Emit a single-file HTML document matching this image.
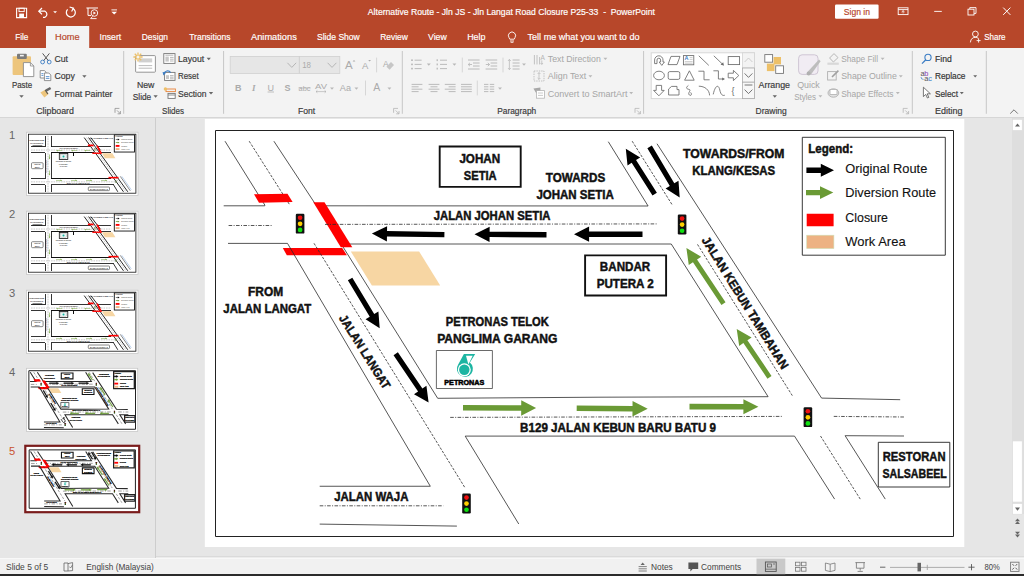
<!DOCTYPE html>
<html lang="en"><head><meta charset="utf-8"><title>Alternative Route - Jln JS - Jln Langat Road Closure P25-33 - PowerPoint</title>
<style>
html,body{margin:0;padding:0;background:#E6E6E6;}
body{width:1024px;height:576px;overflow:hidden;position:relative;font-family:"Liberation Sans",sans-serif;}
.abs{position:absolute;}
#titlebar{left:0;top:0;width:1024px;height:48px;background:#B7472A;}
#ribbon{left:0;top:48px;width:1024px;height:68.6px;background:#F3F3F3;border-bottom:1.6px solid #D6D6D6;}
#pane{left:0;top:118.2px;width:155px;height:439.6px;background:#E6E6E6;border-right:1px solid #CDCDCD;}
#editor{left:156px;top:118.2px;width:868px;height:439.6px;background:#E6E6E6;}
#hscroll{left:156px;top:556px;width:868px;height:2.4px;background:#ECECEC;border-top:0.6px solid #DADADA;}
#vscroll{left:1012px;top:118.2px;width:12px;height:396px;background:#DEDEDE;}
#status{left:0;top:558.4px;width:1024px;height:15.8px;background:#F1F1F1;border-top:0.8px solid #F8F8F8;}
#bottom{left:0;top:574.2px;width:1024px;height:1.8px;background:#2b2b2b;}
svg{position:absolute;left:0;top:0;overflow:visible;}
svg text{font-family:"Liberation Sans",sans-serif;white-space:pre;}
</style></head><body>
<div id="titlebar" class="abs"></div>
<div id="ribbon" class="abs"></div>
<div id="pane" class="abs"></div>
<div id="editor" class="abs"></div>
<div id="vscroll" class="abs"></div>
<div id="hscroll" class="abs"></div>
<div id="status" class="abs"></div>
<div id="bottom" class="abs"></div>
<svg width="1024" height="576" viewBox="0 0 1024 576">
<defs>
<symbol id="s5" viewBox="204.6 118.75 759.9 428.35" preserveAspectRatio="none">
<rect x="204.60" y="118.75" width="760.00" height="428.40" fill="#fff"/>
<rect x="215.50" y="130.50" width="738.00" height="406.00" fill="none" stroke="#222" stroke-width="1.0" vector-effect="non-scaling-stroke"/>
<polygon points="350.80,251.40 419.10,251.40 440.20,285.50 371.90,285.50" fill="#F7D6A3"/>
<polyline points="225.00,141.20 264.80,205.00 264.80,205.80 223.70,205.80" fill="none" stroke="#2b2b2b" stroke-width="0.8" vector-effect="non-scaling-stroke" style="stroke-width:var(--lw,0.8px)"/>
<line x1="249.20" y1="141.20" x2="289.80" y2="205.00" stroke="#2b2b2b" stroke-width="0.8" vector-effect="non-scaling-stroke" style="stroke-width:var(--dw,0.8px)" stroke-dasharray="2.6 1.4"/>
<line x1="273.90" y1="141.20" x2="316.50" y2="205.80" stroke="#2b2b2b" stroke-width="0.8" vector-effect="non-scaling-stroke" style="stroke-width:var(--lw,0.8px)"/>
<polyline points="316.50,205.80 648.10,206.00 608.30,141.70" fill="none" stroke="#2b2b2b" stroke-width="0.8" vector-effect="non-scaling-stroke" style="stroke-width:var(--lw,0.8px)"/>
<polygon points="282.80,248.00 342.20,248.00 346.90,255.20 286.80,255.20" fill="#FF0000" stroke="#FF0000" vector-effect="non-scaling-stroke" style="stroke-width:var(--rw,0px)"/>
<line x1="228.60" y1="225.50" x2="272.80" y2="225.50" stroke="#2b2b2b" stroke-width="0.8" vector-effect="non-scaling-stroke" style="stroke-width:var(--dw,0.8px)" stroke-dasharray="3.6 1.4 1.0 1.4"/>
<polyline points="228.00,243.40 287.50,243.40 430.30,486.25 319.70,486.25" fill="none" stroke="#2b2b2b" stroke-width="0.8" vector-effect="non-scaling-stroke" style="stroke-width:var(--lw,0.8px)"/>
<line x1="314.00" y1="243.30" x2="464.70" y2="487.30" stroke="#2b2b2b" stroke-width="0.8" vector-effect="non-scaling-stroke" style="stroke-width:var(--dw,0.8px)" stroke-dasharray="2.6 1.4"/>
<polyline points="341.20,244.00 437.70,398.30 600.00,397.20 768.10,396.70 671.25,244.00 341.20,244.00" fill="none" stroke="#2b2b2b" stroke-width="0.8" vector-effect="non-scaling-stroke" style="stroke-width:var(--lw,0.8px)"/>
<polygon points="254.00,194.20 287.50,193.80 292.60,201.90 259.00,202.70" fill="#FF0000" stroke="#FF0000" vector-effect="non-scaling-stroke" style="stroke-width:var(--rw,0px)"/>
<polygon points="313.30,202.30 324.50,202.30 352.30,247.20 340.80,247.20" fill="#FF0000" stroke="#FF0000" vector-effect="non-scaling-stroke" style="stroke-width:var(--rw,0px)"/>
<line x1="325.00" y1="224.40" x2="657.00" y2="223.90" stroke="#2b2b2b" stroke-width="0.8" vector-effect="non-scaling-stroke" style="stroke-width:var(--dw,0.8px)" stroke-dasharray="3.6 1.4 1.0 1.4"/>
<line x1="632.20" y1="141.20" x2="672.30" y2="205.00" stroke="#2b2b2b" stroke-width="0.8" vector-effect="non-scaling-stroke" style="stroke-width:var(--dw,0.8px)" stroke-dasharray="2.6 1.4"/>
<line x1="697.50" y1="244.40" x2="792.30" y2="395.60" stroke="#2b2b2b" stroke-width="0.8" vector-effect="non-scaling-stroke" style="stroke-width:var(--dw,0.8px)" stroke-dasharray="2.6 1.4"/>
<polyline points="657.00,143.75 821.60,398.10 900.20,399.70" fill="none" stroke="#2b2b2b" stroke-width="0.8" vector-effect="non-scaling-stroke" style="stroke-width:var(--lw,0.8px)"/>
<line x1="450.20" y1="417.40" x2="781.90" y2="416.40" stroke="#2b2b2b" stroke-width="0.8" vector-effect="non-scaling-stroke" style="stroke-width:var(--dw,0.8px)" stroke-dasharray="3.6 1.4 1.0 1.4"/>
<polyline points="518.75,524.00 465.20,436.10 794.50,436.10 834.60,499.10" fill="none" stroke="#2b2b2b" stroke-width="0.8" vector-effect="non-scaling-stroke" style="stroke-width:var(--lw,0.8px)"/>
<line x1="820.50" y1="436.00" x2="860.25" y2="499.10" stroke="#2b2b2b" stroke-width="0.8" vector-effect="non-scaling-stroke" style="stroke-width:var(--dw,0.8px)" stroke-dasharray="2.6 1.4"/>
<polyline points="885.25,499.10 845.10,435.70 904.00,436.00" fill="none" stroke="#2b2b2b" stroke-width="0.8" vector-effect="non-scaling-stroke" style="stroke-width:var(--lw,0.8px)"/>
<line x1="833.75" y1="416.40" x2="904.00" y2="417.00" stroke="#2b2b2b" stroke-width="0.8" vector-effect="non-scaling-stroke" style="stroke-width:var(--dw,0.8px)" stroke-dasharray="3.6 1.4 1.0 1.4"/>
<line x1="319.70" y1="505.80" x2="443.30" y2="505.80" stroke="#2b2b2b" stroke-width="0.8" vector-effect="non-scaling-stroke" style="stroke-width:var(--dw,0.8px)" stroke-dasharray="3.6 1.4 1.0 1.4"/>
<line x1="319.70" y1="524.10" x2="456.90" y2="526.10" stroke="#2b2b2b" stroke-width="0.8" vector-effect="non-scaling-stroke" style="stroke-width:var(--lw,0.8px)"/>
<polygon points="444.44,231.90 387.04,231.11 387.10,226.16 371.90,233.60 386.89,241.46 386.96,236.51 444.36,237.30" fill="#000" stroke="#000" vector-effect="non-scaling-stroke" style="stroke-width:var(--aw,0px)"/>
<polygon points="546.52,232.10 489.62,231.63 489.66,226.68 474.50,234.20 489.54,241.98 489.58,237.03 546.48,237.50" fill="#000" stroke="#000" vector-effect="non-scaling-stroke" style="stroke-width:var(--aw,0px)"/>
<polygon points="642.50,231.60 589.10,231.52 589.11,226.57 574.00,234.20 589.09,241.87 589.10,236.92 642.50,237.00" fill="#000" stroke="#000" vector-effect="non-scaling-stroke" style="stroke-width:var(--aw,0px)"/>
<polygon points="656.89,192.80 636.04,160.01 640.18,157.38 625.80,148.75 627.52,165.43 631.65,162.80 652.51,195.60" fill="#000" stroke="#000" vector-effect="non-scaling-stroke" style="stroke-width:var(--aw,0px)"/>
<polygon points="647.36,148.13 669.81,185.93 665.59,188.43 679.70,197.50 678.49,180.77 674.28,183.27 651.84,145.47" fill="#000" stroke="#000" vector-effect="non-scaling-stroke" style="stroke-width:var(--aw,0px)"/>
<polygon points="347.87,280.34 369.75,316.78 365.55,319.30 379.70,328.30 378.41,311.58 374.21,314.10 352.33,277.66" fill="#000" stroke="#000" vector-effect="non-scaling-stroke" style="stroke-width:var(--aw,0px)"/>
<polygon points="393.54,355.15 418.06,391.52 414.00,394.26 428.60,402.50 426.43,385.87 422.37,388.61 397.86,352.25" fill="#000" stroke="#000" vector-effect="non-scaling-stroke" style="stroke-width:var(--aw,0px)"/>
<polygon points="462.98,410.45 521.19,410.77 521.16,415.77 536.10,408.10 521.24,400.27 521.22,405.27 463.02,404.95" fill="#6A9A35" stroke="#6A9A35" vector-effect="non-scaling-stroke" style="stroke-width:var(--aw,0px)"/>
<polygon points="576.68,411.05 632.48,411.40 632.45,416.40 647.70,408.75 632.55,400.90 632.52,405.90 576.72,405.55" fill="#6A9A35" stroke="#6A9A35" vector-effect="non-scaling-stroke" style="stroke-width:var(--aw,0px)"/>
<polygon points="689.50,409.40 743.40,409.48 743.39,414.18 758.40,406.70 743.41,399.18 743.40,403.88 689.50,403.80" fill="#6A9A35" stroke="#6A9A35" vector-effect="non-scaling-stroke" style="stroke-width:var(--aw,0px)"/>
<polygon points="725.54,302.24 697.04,259.53 701.24,256.73 686.40,248.00 688.76,265.06 692.97,262.25 721.46,304.96" fill="#6A9A35" stroke="#6A9A35" vector-effect="non-scaling-stroke" style="stroke-width:var(--aw,0px)"/>
<polygon points="771.53,375.93 747.42,340.36 751.60,337.52 736.70,328.90 739.19,345.94 743.37,343.11 767.47,378.67" fill="#6A9A35" stroke="#6A9A35" vector-effect="non-scaling-stroke" style="stroke-width:var(--aw,0px)"/>
<rect x="295.80" y="213.80" width="8.60" height="19.80" fill="#111" rx="1.2"/><circle cx="300.10" cy="217.76" r="2.35" fill="#F01010"/><circle cx="300.10" cy="223.80" r="2.35" fill="#FFD000"/><circle cx="300.10" cy="229.94" r="2.35" fill="#10E010"/>
<rect x="677.80" y="214.60" width="8.60" height="19.80" fill="#111" rx="1.2"/><circle cx="682.10" cy="218.56" r="2.35" fill="#F01010"/><circle cx="682.10" cy="224.60" r="2.35" fill="#FFD000"/><circle cx="682.10" cy="230.74" r="2.35" fill="#10E010"/>
<rect x="803.60" y="407.30" width="8.60" height="19.80" fill="#111" rx="1.2"/><circle cx="807.90" cy="411.26" r="2.35" fill="#F01010"/><circle cx="807.90" cy="417.30" r="2.35" fill="#FFD000"/><circle cx="807.90" cy="423.44" r="2.35" fill="#10E010"/>
<rect x="462.20" y="493.60" width="8.60" height="19.80" fill="#111" rx="1.2"/><circle cx="466.50" cy="497.56" r="2.35" fill="#F01010"/><circle cx="466.50" cy="503.60" r="2.35" fill="#FFD000"/><circle cx="466.50" cy="509.74" r="2.35" fill="#10E010"/>
<rect x="439.70" y="146.50" width="81.00" height="40.40" fill="#fff" stroke="#111" stroke-width="1.9" vector-effect="non-scaling-stroke" style="stroke-width:var(--bw,1.9px)"/>
<text x="459.40" y="162.50" font-size="12.3" fill="#111" font-weight="bold" textLength="40.80" lengthAdjust="spacingAndGlyphs" stroke="#111" vector-effect="non-scaling-stroke" style="stroke-width:var(--tw,0.45px)">JOHAN</text>
<text x="463.75" y="179.70" font-size="12.3" fill="#111" font-weight="bold" textLength="32.85" lengthAdjust="spacingAndGlyphs" stroke="#111" vector-effect="non-scaling-stroke" style="stroke-width:var(--tw,0.45px)">SETIA</text>
<rect x="585.10" y="255.40" width="81.00" height="40.10" fill="#fff" stroke="#111" stroke-width="1.9" vector-effect="non-scaling-stroke" style="stroke-width:var(--bw,1.9px)"/>
<text x="599.80" y="271.25" font-size="12.3" fill="#111" font-weight="bold" textLength="50.50" lengthAdjust="spacingAndGlyphs" stroke="#111" vector-effect="non-scaling-stroke" style="stroke-width:var(--tw,0.45px)">BANDAR</text>
<text x="596.70" y="288.10" font-size="12.3" fill="#111" font-weight="bold" textLength="57.05" lengthAdjust="spacingAndGlyphs" stroke="#111" vector-effect="non-scaling-stroke" style="stroke-width:var(--tw,0.45px)">PUTERA 2</text>
<rect x="878.30" y="442.30" width="71.50" height="44.70" fill="#fff" stroke="#222" stroke-width="0.9" vector-effect="non-scaling-stroke" style="stroke-width:var(--gw,0.9px)"/>
<text x="882.75" y="461.00" font-size="12.9" fill="#111" font-weight="bold" textLength="62.75" lengthAdjust="spacingAndGlyphs" stroke="#111" vector-effect="non-scaling-stroke" style="stroke-width:var(--tw,0.45px)">RESTORAN</text>
<text x="882.50" y="478.20" font-size="12.9" fill="#111" font-weight="bold" textLength="64.30" lengthAdjust="spacingAndGlyphs" stroke="#111" vector-effect="non-scaling-stroke" style="stroke-width:var(--tw,0.45px)">SALSABEEL</text>
<text x="545.80" y="182.00" font-size="12.3" fill="#111" font-weight="bold" textLength="59.40" lengthAdjust="spacingAndGlyphs" stroke="#111" vector-effect="non-scaling-stroke" style="stroke-width:var(--tw,0.45px)">TOWARDS</text>
<text x="536.40" y="199.20" font-size="12.3" fill="#111" font-weight="bold" textLength="77.35" lengthAdjust="spacingAndGlyphs" stroke="#111" vector-effect="non-scaling-stroke" style="stroke-width:var(--tw,0.45px)">JOHAN SETIA</text>
<text x="433.75" y="220.30" font-size="12.3" fill="#111" font-weight="bold" textLength="116.75" lengthAdjust="spacingAndGlyphs" stroke="#111" vector-effect="non-scaling-stroke" style="stroke-width:var(--tw,0.45px)">JALAN JOHAN SETIA</text>
<text x="683.10" y="157.80" font-size="12.3" fill="#111" font-weight="bold" textLength="101.40" lengthAdjust="spacingAndGlyphs" stroke="#111" vector-effect="non-scaling-stroke" style="stroke-width:var(--tw,0.45px)">TOWARDS/FROM</text>
<text x="692.30" y="175.00" font-size="12.3" fill="#111" font-weight="bold" textLength="82.90" lengthAdjust="spacingAndGlyphs" stroke="#111" vector-effect="non-scaling-stroke" style="stroke-width:var(--tw,0.45px)">KLANG/KESAS</text>
<text x="248.00" y="296.10" font-size="12.3" fill="#111" font-weight="bold" textLength="35.10" lengthAdjust="spacingAndGlyphs" stroke="#111" vector-effect="non-scaling-stroke" style="stroke-width:var(--tw,0.45px)">FROM</text>
<text x="223.30" y="313.00" font-size="12.3" fill="#111" font-weight="bold" textLength="87.95" lengthAdjust="spacingAndGlyphs" stroke="#111" vector-effect="non-scaling-stroke" style="stroke-width:var(--tw,0.45px)">JALAN LANGAT</text>
<text x="445.80" y="326.10" font-size="12.3" fill="#111" font-weight="bold" textLength="103.10" lengthAdjust="spacingAndGlyphs" stroke="#111" vector-effect="non-scaling-stroke" style="stroke-width:var(--tw,0.45px)">PETRONAS TELOK</text>
<text x="437.20" y="343.00" font-size="12.3" fill="#111" font-weight="bold" textLength="120.30" lengthAdjust="spacingAndGlyphs" stroke="#111" vector-effect="non-scaling-stroke" style="stroke-width:var(--tw,0.45px)">PANGLIMA GARANG</text>
<text x="520.00" y="431.60" font-size="12.3" fill="#111" font-weight="bold" textLength="196.10" lengthAdjust="spacingAndGlyphs" stroke="#111" vector-effect="non-scaling-stroke" style="stroke-width:var(--tw,0.45px)">B129 JALAN KEBUN BARU BATU 9</text>
<text x="334.20" y="500.90" font-size="12.3" fill="#111" font-weight="bold" textLength="74.20" lengthAdjust="spacingAndGlyphs" stroke="#111" vector-effect="non-scaling-stroke" style="stroke-width:var(--tw,0.45px)">JALAN WAJA</text>
<g transform="translate(338.6,318.05) rotate(57.9)"><text x="0.00" y="0.00" font-size="12.3" fill="#111" font-weight="bold" textLength="84.90" lengthAdjust="spacingAndGlyphs" stroke="#111" vector-effect="non-scaling-stroke" style="stroke-width:var(--tw,0.45px)">JALAN LANGAT</text></g>
<g transform="translate(701.3,240.1) rotate(58.2)"><text x="0.00" y="0.00" font-size="12.3" fill="#111" font-weight="bold" textLength="152.90" lengthAdjust="spacingAndGlyphs" stroke="#111" vector-effect="non-scaling-stroke" style="stroke-width:var(--tw,0.45px)">JALAN KEBUN TAMBAHAN</text></g>
<rect x="436.40" y="350.50" width="56.00" height="38.00" fill="#fff" stroke="#444" stroke-width="0.8" vector-effect="non-scaling-stroke"/>
<path d="M463.9 353.9 L475.2 353.9 L469.9 362.6 A8 8 0 1 1 458.2 364.4 Z" fill="#1CB5A2"/>
<circle cx="464.3" cy="369.8" r="6.5" fill="#fff"/>
<circle cx="464.3" cy="369.8" r="5.2" fill="#1CB5A2"/>
<polygon points="466.00,355.80 472.70,355.80 468.40,364.40" fill="#fff"/>
<text x="444.30" y="385.30" font-size="7" fill="#000" font-weight="bold" textLength="40.00" lengthAdjust="spacingAndGlyphs" stroke="#000" stroke-width="0.5">PETRONAS</text>
<rect x="802.30" y="137.30" width="143.00" height="117.90" fill="#fff" stroke="#222" stroke-width="0.9" vector-effect="non-scaling-stroke" style="stroke-width:var(--gw,0.9px)"/>
<text x="808.30" y="153.00" font-size="12.6" fill="#111" font-weight="bold" textLength="44.80" lengthAdjust="spacingAndGlyphs" stroke="#111" vector-effect="non-scaling-stroke" style="stroke-width:var(--tw,0.45px)">Legend:</text>
<polygon points="806.40,172.95 820.80,172.95 820.80,176.70 834.00,170.20 820.80,163.70 820.80,167.45 806.40,167.45" fill="#000" stroke="#000" vector-effect="non-scaling-stroke" style="stroke-width:var(--aw,0px)"/>
<polygon points="806.00,195.15 820.00,195.15 820.00,199.00 833.30,192.60 820.00,186.20 820.00,190.05 806.00,190.05" fill="#6A9A35" stroke="#6A9A35" vector-effect="non-scaling-stroke" style="stroke-width:var(--aw,0px)"/>
<rect x="806.70" y="213.75" width="26.90" height="12.50" fill="#FF0000"/>
<rect x="806.70" y="235.20" width="27.20" height="13.40" fill="#EDB283" stroke="#CFE2B8" stroke-width="0.6"/>
<text x="845.30" y="172.60" font-size="13.2" fill="#111" textLength="82.00" lengthAdjust="spacingAndGlyphs" stroke="#111" vector-effect="non-scaling-stroke" style="stroke-width:var(--tw,0.12px)">Original Route</text>
<text x="845.30" y="197.00" font-size="13.2" fill="#111" textLength="90.80" lengthAdjust="spacingAndGlyphs" stroke="#111" vector-effect="non-scaling-stroke" style="stroke-width:var(--tw,0.12px)">Diversion Route</text>
<text x="845.30" y="221.70" font-size="13.2" fill="#111" textLength="42.70" lengthAdjust="spacingAndGlyphs" stroke="#111" vector-effect="non-scaling-stroke" style="stroke-width:var(--tw,0.12px)">Closure</text>
<text x="845.30" y="246.35" font-size="13.2" fill="#111" textLength="60.30" lengthAdjust="spacingAndGlyphs" stroke="#111" vector-effect="non-scaling-stroke" style="stroke-width:var(--tw,0.12px)">Work Area</text>
</symbol>
<symbol id="s4" viewBox="204.6 118.75 759.9 428.35" preserveAspectRatio="none">
<rect x="204.60" y="118.75" width="760.00" height="428.40" fill="#fff"/>
<rect x="215.50" y="130.50" width="738.00" height="406.00" fill="none" stroke="#222" stroke-width="1.0" vector-effect="non-scaling-stroke"/>
<polygon points="350.80,251.40 419.10,251.40 440.20,285.50 371.90,285.50" fill="#F7D6A3"/>
<polyline points="225.00,141.20 264.80,205.00 264.80,205.80 223.70,205.80" fill="none" stroke="#2b2b2b" stroke-width="0.8" vector-effect="non-scaling-stroke" style="stroke-width:var(--lw,0.8px)"/>
<line x1="249.20" y1="141.20" x2="289.80" y2="205.00" stroke="#2b2b2b" stroke-width="0.8" vector-effect="non-scaling-stroke" style="stroke-width:var(--dw,0.8px)" stroke-dasharray="2.6 1.4"/>
<line x1="273.90" y1="141.20" x2="316.50" y2="205.80" stroke="#2b2b2b" stroke-width="0.8" vector-effect="non-scaling-stroke" style="stroke-width:var(--lw,0.8px)"/>
<polyline points="316.50,205.80 648.10,206.00 608.30,141.70" fill="none" stroke="#2b2b2b" stroke-width="0.8" vector-effect="non-scaling-stroke" style="stroke-width:var(--lw,0.8px)"/>
<polygon points="282.80,248.00 342.20,248.00 346.90,255.20 286.80,255.20" fill="#FF0000" stroke="#FF0000" vector-effect="non-scaling-stroke" style="stroke-width:var(--rw,0px)"/>
<line x1="228.60" y1="225.50" x2="272.80" y2="225.50" stroke="#2b2b2b" stroke-width="0.8" vector-effect="non-scaling-stroke" style="stroke-width:var(--dw,0.8px)" stroke-dasharray="3.6 1.4 1.0 1.4"/>
<polyline points="228.00,243.40 287.50,243.40 430.30,486.25 319.70,486.25" fill="none" stroke="#2b2b2b" stroke-width="0.8" vector-effect="non-scaling-stroke" style="stroke-width:var(--lw,0.8px)"/>
<line x1="314.00" y1="243.30" x2="464.70" y2="487.30" stroke="#2b2b2b" stroke-width="0.8" vector-effect="non-scaling-stroke" style="stroke-width:var(--dw,0.8px)" stroke-dasharray="2.6 1.4"/>
<polyline points="341.20,244.00 437.70,398.30 600.00,397.20 768.10,396.70 671.25,244.00 341.20,244.00" fill="none" stroke="#2b2b2b" stroke-width="0.8" vector-effect="non-scaling-stroke" style="stroke-width:var(--lw,0.8px)"/>
<polygon points="254.00,194.20 287.50,193.80 292.60,201.90 259.00,202.70" fill="#FF0000" stroke="#FF0000" vector-effect="non-scaling-stroke" style="stroke-width:var(--rw,0px)"/>
<polygon points="313.30,202.30 324.50,202.30 352.30,247.20 340.80,247.20" fill="#FF0000" stroke="#FF0000" vector-effect="non-scaling-stroke" style="stroke-width:var(--rw,0px)"/>
<line x1="325.00" y1="224.40" x2="657.00" y2="223.90" stroke="#2b2b2b" stroke-width="0.8" vector-effect="non-scaling-stroke" style="stroke-width:var(--dw,0.8px)" stroke-dasharray="3.6 1.4 1.0 1.4"/>
<line x1="632.20" y1="141.20" x2="672.30" y2="205.00" stroke="#2b2b2b" stroke-width="0.8" vector-effect="non-scaling-stroke" style="stroke-width:var(--dw,0.8px)" stroke-dasharray="2.6 1.4"/>
<line x1="697.50" y1="244.40" x2="792.30" y2="395.60" stroke="#2b2b2b" stroke-width="0.8" vector-effect="non-scaling-stroke" style="stroke-width:var(--dw,0.8px)" stroke-dasharray="2.6 1.4"/>
<polyline points="657.00,143.75 821.60,398.10 900.20,399.70" fill="none" stroke="#2b2b2b" stroke-width="0.8" vector-effect="non-scaling-stroke" style="stroke-width:var(--lw,0.8px)"/>
<line x1="450.20" y1="417.40" x2="781.90" y2="416.40" stroke="#2b2b2b" stroke-width="0.8" vector-effect="non-scaling-stroke" style="stroke-width:var(--dw,0.8px)" stroke-dasharray="3.6 1.4 1.0 1.4"/>
<polyline points="518.75,524.00 465.20,436.10 794.50,436.10 834.60,499.10" fill="none" stroke="#2b2b2b" stroke-width="0.8" vector-effect="non-scaling-stroke" style="stroke-width:var(--lw,0.8px)"/>
<line x1="820.50" y1="436.00" x2="860.25" y2="499.10" stroke="#2b2b2b" stroke-width="0.8" vector-effect="non-scaling-stroke" style="stroke-width:var(--dw,0.8px)" stroke-dasharray="2.6 1.4"/>
<polyline points="885.25,499.10 845.10,435.70 904.00,436.00" fill="none" stroke="#2b2b2b" stroke-width="0.8" vector-effect="non-scaling-stroke" style="stroke-width:var(--lw,0.8px)"/>
<line x1="833.75" y1="416.40" x2="904.00" y2="417.00" stroke="#2b2b2b" stroke-width="0.8" vector-effect="non-scaling-stroke" style="stroke-width:var(--dw,0.8px)" stroke-dasharray="3.6 1.4 1.0 1.4"/>
<line x1="319.70" y1="505.80" x2="443.30" y2="505.80" stroke="#2b2b2b" stroke-width="0.8" vector-effect="non-scaling-stroke" style="stroke-width:var(--dw,0.8px)" stroke-dasharray="3.6 1.4 1.0 1.4"/>
<line x1="319.70" y1="524.10" x2="456.90" y2="526.10" stroke="#2b2b2b" stroke-width="0.8" vector-effect="non-scaling-stroke" style="stroke-width:var(--lw,0.8px)"/>
<polygon points="357.50,220.10 406.90,220.10 406.90,225.05 422.00,217.40 406.90,209.75 406.90,214.70 357.50,214.70" fill="#000" stroke="#000" vector-effect="non-scaling-stroke" style="stroke-width:var(--aw,0px)"/>
<polygon points="456.90,220.10 510.90,220.10 510.90,225.05 526.00,217.40 510.90,209.75 510.90,214.70 456.90,214.70" fill="#000" stroke="#000" vector-effect="non-scaling-stroke" style="stroke-width:var(--aw,0px)"/>
<polygon points="560.70,220.10 614.80,220.10 614.80,225.05 629.90,217.40 614.80,209.75 614.80,214.70 560.70,214.70" fill="#000" stroke="#000" vector-effect="non-scaling-stroke" style="stroke-width:var(--aw,0px)"/>
<polygon points="656.77,192.89 636.18,160.52 640.45,157.81 625.80,148.75 627.79,165.85 632.05,163.14 652.63,195.51" fill="#6A9A35" stroke="#6A9A35" vector-effect="non-scaling-stroke" style="stroke-width:var(--aw,0px)"/>
<polygon points="744.06,295.67 719.48,257.68 723.72,254.94 709.00,246.00 711.12,263.09 715.36,260.34 739.94,298.33" fill="#6A9A35" stroke="#6A9A35" vector-effect="non-scaling-stroke" style="stroke-width:var(--aw,0px)"/>
<polygon points="798.06,379.67 773.48,341.68 777.72,338.94 763.00,330.00 765.12,347.09 769.36,344.34 793.94,382.33" fill="#6A9A35" stroke="#6A9A35" vector-effect="non-scaling-stroke" style="stroke-width:var(--aw,0px)"/>
<polygon points="560.00,423.75 515.00,423.75 515.00,418.75 500.00,426.50 515.00,434.25 515.00,429.25 560.00,429.25" fill="#6A9A35" stroke="#6A9A35" vector-effect="non-scaling-stroke" style="stroke-width:var(--aw,0px)"/>
<polygon points="673.00,423.75 619.00,423.75 619.00,418.75 604.00,426.50 619.00,434.25 619.00,429.25 673.00,429.25" fill="#6A9A35" stroke="#6A9A35" vector-effect="non-scaling-stroke" style="stroke-width:var(--aw,0px)"/>
<polygon points="768.00,423.75 722.70,423.75 722.70,418.75 707.70,426.50 722.70,434.25 722.70,429.25 768.00,429.25" fill="#6A9A35" stroke="#6A9A35" vector-effect="non-scaling-stroke" style="stroke-width:var(--aw,0px)"/>
<polygon points="313.75,269.30 335.23,306.33 330.99,308.79 345.00,318.00 343.96,301.26 339.72,303.72 318.25,266.70" fill="#000" stroke="#000" vector-effect="non-scaling-stroke" style="stroke-width:var(--aw,0px)"/>
<polygon points="365.77,357.33 389.09,396.45 384.88,398.96 399.00,408.00 397.76,391.28 393.55,393.78 370.23,354.67" fill="#000" stroke="#000" vector-effect="non-scaling-stroke" style="stroke-width:var(--aw,0px)"/>
<path d="M438 466 L449 484 A9 9 0 0 0 466 476 L458 462" fill="none" stroke="#000" stroke-width="5"/>
<polygon points="450.00,466.00 455.00,452.00 467.00,459.00" fill="#000"/>
<rect x="295.80" y="213.80" width="8.60" height="19.80" fill="#111" rx="1.2"/><circle cx="300.10" cy="217.76" r="2.35" fill="#F01010"/><circle cx="300.10" cy="223.80" r="2.35" fill="#FFD000"/><circle cx="300.10" cy="229.94" r="2.35" fill="#10E010"/>
<rect x="677.80" y="214.60" width="8.60" height="19.80" fill="#111" rx="1.2"/><circle cx="682.10" cy="218.56" r="2.35" fill="#F01010"/><circle cx="682.10" cy="224.60" r="2.35" fill="#FFD000"/><circle cx="682.10" cy="230.74" r="2.35" fill="#10E010"/>
<rect x="803.60" y="407.30" width="8.60" height="19.80" fill="#111" rx="1.2"/><circle cx="807.90" cy="411.26" r="2.35" fill="#F01010"/><circle cx="807.90" cy="417.30" r="2.35" fill="#FFD000"/><circle cx="807.90" cy="423.44" r="2.35" fill="#10E010"/>
<rect x="462.20" y="493.60" width="8.60" height="19.80" fill="#111" rx="1.2"/><circle cx="466.50" cy="497.56" r="2.35" fill="#F01010"/><circle cx="466.50" cy="503.60" r="2.35" fill="#FFD000"/><circle cx="466.50" cy="509.74" r="2.35" fill="#10E010"/>
<rect x="439.70" y="146.50" width="81.00" height="40.40" fill="#fff" stroke="#111" stroke-width="1.9" vector-effect="non-scaling-stroke" style="stroke-width:var(--bw,1.9px)"/>
<text x="459.40" y="162.50" font-size="12.3" fill="#111" font-weight="bold" textLength="40.80" lengthAdjust="spacingAndGlyphs" stroke="#111" vector-effect="non-scaling-stroke" style="stroke-width:var(--tw,0.45px)">JOHAN</text>
<text x="463.75" y="179.70" font-size="12.3" fill="#111" font-weight="bold" textLength="32.85" lengthAdjust="spacingAndGlyphs" stroke="#111" vector-effect="non-scaling-stroke" style="stroke-width:var(--tw,0.45px)">SETIA</text>
<rect x="585.10" y="255.40" width="81.00" height="40.10" fill="#fff" stroke="#111" stroke-width="1.9" vector-effect="non-scaling-stroke" style="stroke-width:var(--bw,1.9px)"/>
<text x="599.80" y="271.25" font-size="12.3" fill="#111" font-weight="bold" textLength="50.50" lengthAdjust="spacingAndGlyphs" stroke="#111" vector-effect="non-scaling-stroke" style="stroke-width:var(--tw,0.45px)">BANDAR</text>
<text x="596.70" y="288.10" font-size="12.3" fill="#111" font-weight="bold" textLength="57.05" lengthAdjust="spacingAndGlyphs" stroke="#111" vector-effect="non-scaling-stroke" style="stroke-width:var(--tw,0.45px)">PUTERA 2</text>
<rect x="878.30" y="442.30" width="71.50" height="44.70" fill="#fff" stroke="#222" stroke-width="0.9" vector-effect="non-scaling-stroke" style="stroke-width:var(--gw,0.9px)"/>
<text x="882.75" y="461.00" font-size="12.9" fill="#111" font-weight="bold" textLength="62.75" lengthAdjust="spacingAndGlyphs" stroke="#111" vector-effect="non-scaling-stroke" style="stroke-width:var(--tw,0.45px)">RESTORAN</text>
<text x="882.50" y="478.20" font-size="12.9" fill="#111" font-weight="bold" textLength="64.30" lengthAdjust="spacingAndGlyphs" stroke="#111" vector-effect="non-scaling-stroke" style="stroke-width:var(--tw,0.45px)">SALSABEEL</text>
<text x="328.00" y="170.00" font-size="12.3" fill="#111" font-weight="bold" textLength="60.00" lengthAdjust="spacingAndGlyphs" stroke="#111" vector-effect="non-scaling-stroke" style="stroke-width:var(--tw,0.45px)">TOWARDS</text>
<text x="318.40" y="186.50" font-size="12.3" fill="#111" font-weight="bold" textLength="77.90" lengthAdjust="spacingAndGlyphs" stroke="#111" vector-effect="non-scaling-stroke" style="stroke-width:var(--tw,0.45px)">JOHAN SETIA</text>
<text x="439.50" y="239.00" font-size="12.3" fill="#111" font-weight="bold" textLength="112.50" lengthAdjust="spacingAndGlyphs" stroke="#111" vector-effect="non-scaling-stroke" style="stroke-width:var(--tw,0.45px)">JALAN JOHAN SETIA</text>
<text x="700.00" y="157.80" font-size="12.3" fill="#111" font-weight="bold" textLength="68.00" lengthAdjust="spacingAndGlyphs" stroke="#111" vector-effect="non-scaling-stroke" style="stroke-width:var(--tw,0.45px)">TOWARDS</text>
<text x="692.30" y="175.00" font-size="12.3" fill="#111" font-weight="bold" textLength="82.90" lengthAdjust="spacingAndGlyphs" stroke="#111" vector-effect="non-scaling-stroke" style="stroke-width:var(--tw,0.45px)">KLANG/KESAS</text>
<text x="445.80" y="326.10" font-size="12.3" fill="#111" font-weight="bold" textLength="103.10" lengthAdjust="spacingAndGlyphs" stroke="#111" vector-effect="non-scaling-stroke" style="stroke-width:var(--tw,0.45px)">PETRONAS TELOK</text>
<text x="437.20" y="343.00" font-size="12.3" fill="#111" font-weight="bold" textLength="120.30" lengthAdjust="spacingAndGlyphs" stroke="#111" vector-effect="non-scaling-stroke" style="stroke-width:var(--tw,0.45px)">PANGLIMA GARANG</text>
<text x="517.00" y="411.50" font-size="12.3" fill="#111" font-weight="bold" textLength="190.00" lengthAdjust="spacingAndGlyphs" stroke="#111" vector-effect="non-scaling-stroke" style="stroke-width:var(--tw,0.45px)">B129 JALAN KEBUN BARU BATU 9</text>
<text x="334.20" y="500.90" font-size="12.3" fill="#111" font-weight="bold" textLength="74.20" lengthAdjust="spacingAndGlyphs" stroke="#111" vector-effect="non-scaling-stroke" style="stroke-width:var(--tw,0.45px)">JALAN WAJA</text>
<text x="510.00" y="459.50" font-size="12.3" fill="#111" font-weight="bold" textLength="60.00" lengthAdjust="spacingAndGlyphs" stroke="#111" vector-effect="non-scaling-stroke" style="stroke-width:var(--tw,0.45px)">TOWARDS</text>
<text x="496.00" y="476.00" font-size="12.3" fill="#111" font-weight="bold" textLength="88.00" lengthAdjust="spacingAndGlyphs" stroke="#111" vector-effect="non-scaling-stroke" style="stroke-width:var(--tw,0.45px)">JALAN LANGAT</text>
<g transform="translate(352,292) rotate(57.9)"><text x="0.00" y="0.00" font-size="12.3" fill="#111" font-weight="bold" textLength="84.90" lengthAdjust="spacingAndGlyphs" stroke="#111" vector-effect="non-scaling-stroke" style="stroke-width:var(--tw,0.45px)">JALAN LANGAT</text></g>
<g transform="translate(679,246) rotate(58.2)"><text x="0.00" y="0.00" font-size="12.3" fill="#111" font-weight="bold" textLength="152.90" lengthAdjust="spacingAndGlyphs" stroke="#111" vector-effect="non-scaling-stroke" style="stroke-width:var(--tw,0.45px)">JALAN KEBUN TAMBAHAN</text></g>
<rect x="436.40" y="350.50" width="56.00" height="38.00" fill="#fff" stroke="#444" stroke-width="0.8" vector-effect="non-scaling-stroke"/>
<path d="M463.9 353.9 L475.2 353.9 L469.9 362.6 A8 8 0 1 1 458.2 364.4 Z" fill="#1CB5A2"/>
<circle cx="464.3" cy="369.8" r="6.5" fill="#fff"/>
<circle cx="464.3" cy="369.8" r="5.2" fill="#1CB5A2"/>
<polygon points="466.00,355.80 472.70,355.80 468.40,364.40" fill="#fff"/>
<text x="444.30" y="385.30" font-size="7" fill="#000" font-weight="bold" textLength="40.00" lengthAdjust="spacingAndGlyphs" stroke="#000" stroke-width="0.5">PETRONAS</text>
<rect x="802.30" y="137.30" width="143.00" height="117.90" fill="#fff" stroke="#222" stroke-width="0.9" vector-effect="non-scaling-stroke" style="stroke-width:var(--gw,0.9px)"/>
<text x="808.30" y="153.00" font-size="12.6" fill="#111" font-weight="bold" textLength="44.80" lengthAdjust="spacingAndGlyphs" stroke="#111" vector-effect="non-scaling-stroke" style="stroke-width:var(--tw,0.45px)">Legend:</text>
<polygon points="806.40,172.95 820.80,172.95 820.80,176.70 834.00,170.20 820.80,163.70 820.80,167.45 806.40,167.45" fill="#000" stroke="#000" vector-effect="non-scaling-stroke" style="stroke-width:var(--aw,0px)"/>
<polygon points="806.00,195.15 820.00,195.15 820.00,199.00 833.30,192.60 820.00,186.20 820.00,190.05 806.00,190.05" fill="#6A9A35" stroke="#6A9A35" vector-effect="non-scaling-stroke" style="stroke-width:var(--aw,0px)"/>
<rect x="806.70" y="213.75" width="26.90" height="12.50" fill="#FF0000"/>
<rect x="806.70" y="235.20" width="27.20" height="13.40" fill="#EDB283" stroke="#CFE2B8" stroke-width="0.6"/>
<text x="845.30" y="172.60" font-size="13.2" fill="#111" textLength="82.00" lengthAdjust="spacingAndGlyphs" stroke="#111" vector-effect="non-scaling-stroke" style="stroke-width:var(--tw,0.12px)">Original Route</text>
<text x="845.30" y="197.00" font-size="13.2" fill="#111" textLength="90.80" lengthAdjust="spacingAndGlyphs" stroke="#111" vector-effect="non-scaling-stroke" style="stroke-width:var(--tw,0.12px)">Diversion Route</text>
<text x="845.30" y="221.70" font-size="13.2" fill="#111" textLength="42.70" lengthAdjust="spacingAndGlyphs" stroke="#111" vector-effect="non-scaling-stroke" style="stroke-width:var(--tw,0.12px)">Closure</text>
<text x="845.30" y="246.35" font-size="13.2" fill="#111" textLength="60.30" lengthAdjust="spacingAndGlyphs" stroke="#111" vector-effect="non-scaling-stroke" style="stroke-width:var(--tw,0.12px)">Work Area</text>
</symbol>
<symbol id="sA" viewBox="0 0 110 62" preserveAspectRatio="none">
<rect x="0.00" y="0.00" width="110.00" height="62.00" fill="#fff"/>
<rect x="1.20" y="1.20" width="107.40" height="59.20" fill="none" stroke="#111" stroke-width="0.8"/>
<line x1="18.10" y1="2.80" x2="18.10" y2="14.00" stroke="#111" stroke-width="0.85" shape-rendering="crispEdges"/>
<line x1="18.10" y1="20.00" x2="18.10" y2="46.10" stroke="#111" stroke-width="0.85" shape-rendering="crispEdges"/>
<line x1="18.10" y1="52.10" x2="18.10" y2="59.00" stroke="#111" stroke-width="0.85" shape-rendering="crispEdges"/>
<line x1="20.70" y1="2.80" x2="20.70" y2="59.00" stroke="#777" stroke-width="0.4" stroke-dasharray="1.6 0.9"/>
<line x1="23.70" y1="2.80" x2="23.70" y2="14.00" stroke="#111" stroke-width="0.85" shape-rendering="crispEdges"/>
<line x1="23.70" y1="20.00" x2="23.70" y2="46.10" stroke="#111" stroke-width="0.85" shape-rendering="crispEdges"/>
<line x1="23.70" y1="52.10" x2="23.70" y2="59.00" stroke="#111" stroke-width="0.85" shape-rendering="crispEdges"/>
<line x1="3.70" y1="14.00" x2="18.10" y2="14.00" stroke="#111" stroke-width="0.85" shape-rendering="crispEdges"/>
<line x1="23.70" y1="14.00" x2="62.50" y2="14.00" stroke="#111" stroke-width="0.85" shape-rendering="crispEdges"/>
<line x1="70.00" y1="14.00" x2="84.00" y2="14.00" stroke="#111" stroke-width="0.85" shape-rendering="crispEdges"/>
<line x1="3.70" y1="17.10" x2="84.00" y2="17.10" stroke="#777" stroke-width="0.4" stroke-dasharray="1.6 0.9"/>
<line x1="3.70" y1="20.00" x2="18.10" y2="20.00" stroke="#111" stroke-width="0.85" shape-rendering="crispEdges"/>
<line x1="23.70" y1="20.00" x2="66.50" y2="20.00" stroke="#111" stroke-width="1.1" shape-rendering="crispEdges"/>
<line x1="74.00" y1="20.00" x2="84.00" y2="20.00" stroke="#111" stroke-width="0.85" shape-rendering="crispEdges"/>
<line x1="3.70" y1="46.10" x2="18.10" y2="46.10" stroke="#111" stroke-width="0.85" shape-rendering="crispEdges"/>
<line x1="23.70" y1="46.10" x2="84.00" y2="46.10" stroke="#111" stroke-width="1.1" shape-rendering="crispEdges"/>
<line x1="3.70" y1="49.00" x2="88.00" y2="49.00" stroke="#777" stroke-width="0.4" stroke-dasharray="1.6 0.9"/>
<line x1="3.70" y1="52.10" x2="18.10" y2="52.10" stroke="#111" stroke-width="0.85" shape-rendering="crispEdges"/>
<line x1="23.70" y1="52.10" x2="86.30" y2="52.10" stroke="#111" stroke-width="0.85" shape-rendering="crispEdges"/>
<line x1="86.30" y1="52.10" x2="90.50" y2="59.00" stroke="#111" stroke-width="0.85"/>
<line x1="56.90" y1="4.60" x2="96.20" y2="59.00" stroke="#111" stroke-width="0.9"/>
<line x1="59.30" y1="4.60" x2="98.20" y2="58.50" stroke="#777" stroke-width="0.4" stroke-dasharray="1.6 0.9"/>
<line x1="61.30" y1="4.60" x2="100.50" y2="59.00" stroke="#111" stroke-width="0.9"/>
<line x1="63.50" y1="4.60" x2="73.00" y2="17.00" stroke="#111" stroke-width="0.9"/>
<line x1="93.00" y1="43.50" x2="103.00" y2="58.00" stroke="#111" stroke-width="0.5"/>
<line x1="94.50" y1="43.50" x2="104.00" y2="57.00" stroke="#8fb4e0" stroke-width="0.6"/>
<rect x="87.00" y="1.90" width="20.20" height="17.20" fill="#fff" stroke="#111" stroke-width="0.9"/>
<text x="88.30" y="4.40" font-size="1.9" fill="#222" font-weight="bold">Legend:</text>
<polygon points="88.50,6.85 90.50,6.85 90.50,7.40 92.30,6.50 90.50,5.60 90.50,6.15 88.50,6.15" fill="#111" stroke="#111" vector-effect="non-scaling-stroke" style="stroke-width:var(--aw,0px)"/>
<polygon points="88.50,9.95 90.50,9.95 90.50,10.50 92.30,9.60 90.50,8.70 90.50,9.25 88.50,9.25" fill="#6A9A35" stroke="#6A9A35" vector-effect="non-scaling-stroke" style="stroke-width:var(--aw,0px)"/>
<rect x="88.40" y="12.00" width="3.80" height="1.90" fill="#FF0000"/>
<rect x="88.40" y="15.20" width="3.80" height="1.90" fill="#EDB283"/>
<text x="94.00" y="7.10" font-size="1.75" fill="#333">Original Route</text>
<text x="94.00" y="10.20" font-size="1.75" fill="#333">Diversion Route</text>
<text x="94.00" y="13.60" font-size="1.75" fill="#333">Closure</text>
<text x="94.00" y="16.80" font-size="1.75" fill="#333">Work Area</text>
<rect x="60.60" y="11.60" width="5.70" height="1.70" fill="#FF0000"/>
<polygon points="68.80,12.60 70.60,12.60 74.40,19.80 72.40,19.80" fill="#FF0000"/>
<rect x="65.00" y="19.60" width="9.40" height="1.40" fill="#FF0000"/>
<rect x="81.20" y="44.00" width="10.00" height="1.60" fill="#FF0000"/>
<polygon points="74.60,20.20 85.00,20.20 88.10,25.30 77.60,25.30" fill="#F7D6A3"/>
<rect x="4.20" y="29.80" width="11.60" height="6.00" fill="#fff" stroke="#555" stroke-width="0.7" rx="1"/>
<text x="10.00" y="32.50" font-size="1.8" fill="#1a1a1a" font-weight="bold" text-anchor="middle">JOHAN</text>
<text x="10.00" y="34.70" font-size="1.8" fill="#1a1a1a" font-weight="bold" text-anchor="middle">SETIA</text>
<rect x="61.00" y="54.20" width="21.20" height="3.60" fill="#fff" stroke="#555" stroke-width="0.7" rx="0.8"/>
<text x="71.60" y="56.80" font-size="1.9" fill="#333" font-weight="bold" text-anchor="middle">BANDAR PUTERA 2</text>
<rect x="32.00" y="20.60" width="8.50" height="6.00" fill="#fff" stroke="#111" stroke-width="0.8"/>
<rect x="33.30" y="21.60" width="5.90" height="3.60" fill="#e8f4f2" stroke="#888" stroke-width="0.3"/>
<circle cx="36.2" cy="23.6" r="1" fill="#14B4A0"/>
<line x1="46.50" y1="19.50" x2="46.50" y2="23.00" stroke="#111" stroke-width="1.1" shape-rendering="crispEdges"/>
<polygon points="35.00,17.50 30.50,17.50 30.50,16.95 28.70,17.80 30.50,18.65 30.50,18.10 35.00,18.10" fill="#7DAA48" stroke="#7DAA48" vector-effect="non-scaling-stroke" style="stroke-width:var(--aw,0px)"/>
<polygon points="50.00,17.50 45.50,17.50 45.50,16.95 43.70,17.80 45.50,18.65 45.50,18.10 50.00,18.10" fill="#7DAA48" stroke="#7DAA48" vector-effect="non-scaling-stroke" style="stroke-width:var(--aw,0px)"/>
<polygon points="63.20,17.50 58.70,17.50 58.70,16.95 56.90,17.80 58.70,18.65 58.70,18.10 63.20,18.10" fill="#7DAA48" stroke="#7DAA48" vector-effect="non-scaling-stroke" style="stroke-width:var(--aw,0px)"/>
<polygon points="21.90,21.50 21.90,24.70 21.35,24.70 22.20,26.50 23.05,24.70 22.50,24.70 22.50,21.50" fill="#7DAA48" stroke="#7DAA48" vector-effect="non-scaling-stroke" style="stroke-width:var(--aw,0px)"/>
<polygon points="21.90,37.70 21.90,40.90 21.35,40.90 22.20,42.70 23.05,40.90 22.50,40.90 22.50,37.70" fill="#7DAA48" stroke="#7DAA48" vector-effect="non-scaling-stroke" style="stroke-width:var(--aw,0px)"/>
<polygon points="28.70,47.90 33.20,47.90 33.20,48.45 35.00,47.60 33.20,46.75 33.20,47.30 28.70,47.30" fill="#7DAA48" stroke="#7DAA48" vector-effect="non-scaling-stroke" style="stroke-width:var(--aw,0px)"/>
<polygon points="43.70,47.90 48.20,47.90 48.20,48.45 50.00,47.60 48.20,46.75 48.20,47.30 43.70,47.30" fill="#7DAA48" stroke="#7DAA48" vector-effect="non-scaling-stroke" style="stroke-width:var(--aw,0px)"/>
<polygon points="58.70,47.90 63.20,47.90 63.20,48.45 65.00,47.60 63.20,46.75 63.20,47.30 58.70,47.30" fill="#7DAA48" stroke="#7DAA48" vector-effect="non-scaling-stroke" style="stroke-width:var(--aw,0px)"/>
<polygon points="73.70,47.90 78.20,47.90 78.20,48.45 80.00,47.60 78.20,46.75 78.20,47.30 73.70,47.30" fill="#7DAA48" stroke="#7DAA48" vector-effect="non-scaling-stroke" style="stroke-width:var(--aw,0px)"/>
<text x="9.40" y="8.20" font-size="1.8" fill="#1a1a1a" font-weight="bold" text-anchor="middle">TOWARDS/FROM</text>
<text x="9.40" y="10.60" font-size="1.8" fill="#1a1a1a" font-weight="bold" text-anchor="middle">KLANG/KESAS</text>
<line x1="5.20" y1="13.00" x2="15.00" y2="13.00" stroke="#111" stroke-width="0.9"/>
<text x="41.50" y="16.20" font-size="1.8" fill="#1a1a1a" font-weight="bold" text-anchor="middle">JALAN JOHAN SETIA</text>
<text x="74.00" y="6.40" font-size="1.8" fill="#1a1a1a" font-weight="bold" text-anchor="middle">JALAN KEBUN TAMBAHAN</text>
<text x="36.20" y="29.60" font-size="1.7" fill="#333" font-weight="bold" text-anchor="middle">PETRONAS TELOK</text>
<text x="36.20" y="31.80" font-size="1.7" fill="#333" font-weight="bold" text-anchor="middle">PANGLIMA</text>
<text x="36.20" y="34.00" font-size="1.7" fill="#333" font-weight="bold" text-anchor="middle">GARANG</text>
<text x="51.00" y="51.50" font-size="1.8" fill="#1a1a1a" font-weight="bold" text-anchor="middle">B129 JALAN KEBUN BARU</text>
<g transform="translate(19.6,40) rotate(-90)"><text x="0.00" y="0.00" font-size="1.7" fill="#666" font-weight="bold">JALAN LANGAT</text></g>
<rect x="67.20" y="15.00" width="1.00" height="2.60" fill="#7a8a40"/>
<rect x="88.20" y="47.60" width="1.00" height="2.60" fill="#5a7a40"/>
</symbol>
</defs>
<g id="g-title">
<path d="M16.6 8.2 H26.6 V17.6 H16.6 Z" fill="none" stroke="#fff" stroke-width="1.1"/>
<rect x="19.00" y="8.20" width="5.20" height="3.40" fill="none" stroke="#fff" stroke-width="0.9"/>
<rect x="19.20" y="13.60" width="4.80" height="4.00" fill="#fff"/>
<path d="M39 11.2 H45 A3.4 3.4 0 0 1 45 17.3 H43" fill="none" stroke="#fff" stroke-width="1.25"/>
<path d="M42 8 L38.8 11.2 L42 14.4" fill="none" stroke="#fff" stroke-width="1.25"/>
<polygon points="53.20,11.30 57.00,11.30 55.10,13.20" fill="#fff"/>
<path d="M67.6 9.4 A4.5 4.5 0 1 0 72.6 8.4" fill="none" stroke="#fff" stroke-width="1.25"/>
<path d="M69.6 7 L73.4 8.2 L71.6 11.6" fill="none" stroke="#fff" stroke-width="1.15"/>
<path d="M86.4 8 H98 M88 8 V15.4 H91" fill="none" stroke="#fff" stroke-width="1.0"/>
<circle cx="94.4" cy="13" r="3.3" fill="none" stroke="#fff" stroke-width="0.9"/>
<polygon points="93.40,11.40 96.00,13.00 93.40,14.60" fill="#fff"/>
<path d="M92.6 16.4 L90.6 18.6 H96.6" fill="none" stroke="#fff" stroke-width="0.9"/>
<line x1="111.40" y1="9.90" x2="117.00" y2="9.90" stroke="#fff" stroke-width="0.9"/>
<polygon points="111.40,11.80 117.00,11.80 114.20,14.60" fill="#fff"/>
<text x="367.80" y="15.20" font-size="9.2" fill="#fff" textLength="287.20" lengthAdjust="spacingAndGlyphs" stroke="#fff" stroke-width="0.18">Alternative Route - Jln JS - Jln Langat Road Closure P25-33  -  PowerPoint</text>
<rect x="835.00" y="4.60" width="43.60" height="14.20" fill="#fff" rx="1.2"/>
<text x="843.80" y="14.60" font-size="9.2" fill="#B7472A" textLength="26.20" lengthAdjust="spacingAndGlyphs" stroke="#B7472A" stroke-width="0.18">Sign in</text>
<rect x="898.20" y="7.80" width="9.80" height="6.80" fill="none" stroke="#fff" stroke-width="0.9"/>
<line x1="898.20" y1="9.60" x2="908.00" y2="9.60" stroke="#fff" stroke-width="0.9"/>
<path d="M903.1 13.4 V10.8 M901.6 12 L903.1 10.6 L904.6 12" fill="none" stroke="#fff" stroke-width="0.8"/>
<line x1="934.20" y1="11.40" x2="941.80" y2="11.40" stroke="#fff" stroke-width="0.9"/>
<rect x="968.00" y="9.20" width="6.00" height="5.80" fill="none" stroke="#fff" stroke-width="0.9"/>
<path d="M969.8 9.2 V7.6 H976 V13.4 H974" fill="none" stroke="#fff" stroke-width="0.9"/>
<path d="M1003.2 7.6 L1010.4 14.9 M1010.4 7.6 L1003.2 14.9" fill="none" stroke="#fff" stroke-width="1.0"/>
</g>
<g id="g-tabs">
<rect x="46.00" y="26.00" width="43.20" height="22.20" fill="#F3F3F3"/>
<text x="15.20" y="40.00" font-size="9.3" fill="#fff" textLength="13.20" lengthAdjust="spacingAndGlyphs" stroke="#fff" stroke-width="0.18">File</text>
<text x="99.50" y="40.00" font-size="9.3" fill="#fff" textLength="21.70" lengthAdjust="spacingAndGlyphs" stroke="#fff" stroke-width="0.18">Insert</text>
<text x="141.80" y="40.00" font-size="9.3" fill="#fff" textLength="26.20" lengthAdjust="spacingAndGlyphs" stroke="#fff" stroke-width="0.18">Design</text>
<text x="189.20" y="40.00" font-size="9.3" fill="#fff" textLength="41.30" lengthAdjust="spacingAndGlyphs" stroke="#fff" stroke-width="0.18">Transitions</text>
<text x="251.00" y="40.00" font-size="9.3" fill="#fff" textLength="45.80" lengthAdjust="spacingAndGlyphs" stroke="#fff" stroke-width="0.18">Animations</text>
<text x="317.00" y="40.00" font-size="9.3" fill="#fff" textLength="42.80" lengthAdjust="spacingAndGlyphs" stroke="#fff" stroke-width="0.18">Slide Show</text>
<text x="380.20" y="40.00" font-size="9.3" fill="#fff" textLength="27.60" lengthAdjust="spacingAndGlyphs" stroke="#fff" stroke-width="0.18">Review</text>
<text x="428.00" y="40.00" font-size="9.3" fill="#fff" textLength="18.80" lengthAdjust="spacingAndGlyphs" stroke="#fff" stroke-width="0.18">View</text>
<text x="467.20" y="40.00" font-size="9.3" fill="#fff" textLength="18.30" lengthAdjust="spacingAndGlyphs" stroke="#fff" stroke-width="0.18">Help</text>
<text x="55.00" y="40.00" font-size="9.3" fill="#B7472A" textLength="24.60" lengthAdjust="spacingAndGlyphs" stroke="#B7472A" stroke-width="0.18">Home</text>
<path d="M509 37.6 A3.6 3.6 0 1 1 515 37.6 L514.2 39.2 H509.8 Z" fill="none" stroke="#fff" stroke-width="0.9"/>
<line x1="510.00" y1="41.00" x2="514.00" y2="41.00" stroke="#fff" stroke-width="0.9"/>
<line x1="510.60" y1="42.40" x2="513.40" y2="42.40" stroke="#fff" stroke-width="0.8"/>
<text x="527.50" y="40.00" font-size="9.3" fill="#fff" textLength="112.00" lengthAdjust="spacingAndGlyphs" stroke="#fff" stroke-width="0.18">Tell me what you want to do</text>
<circle cx="975.4" cy="34" r="2.9" fill="none" stroke="#fff" stroke-width="0.9"/>
<path d="M970.4 42.4 A5 5 0 0 1 978.6 38.4" fill="none" stroke="#fff" stroke-width="0.9"/>
<path d="M978.6 38.6 V42.6 M976.6 40.6 H980.6" fill="none" stroke="#fff" stroke-width="0.9"/>
<text x="984.20" y="40.00" font-size="9.3" fill="#fff" textLength="21.30" lengthAdjust="spacingAndGlyphs" stroke="#fff" stroke-width="0.18">Share</text>
</g>
<g id="g-ribbon">
<line x1="123.70" y1="51.00" x2="123.70" y2="113.80" stroke="#C6C6C6" stroke-width="1.0"/>
<line x1="223.60" y1="51.00" x2="223.60" y2="113.80" stroke="#C6C6C6" stroke-width="1.0"/>
<line x1="402.30" y1="51.00" x2="402.30" y2="113.80" stroke="#C6C6C6" stroke-width="1.0"/>
<line x1="643.60" y1="51.00" x2="643.60" y2="113.80" stroke="#C6C6C6" stroke-width="1.0"/>
<line x1="912.30" y1="51.00" x2="912.30" y2="113.80" stroke="#C6C6C6" stroke-width="1.0"/>
<line x1="986.30" y1="51.00" x2="986.30" y2="113.80" stroke="#C6C6C6" stroke-width="1.0"/>
<rect x="12.60" y="56.20" width="18.40" height="18.80" fill="#EDC57C" rx="1"/>
<rect x="17.00" y="53.80" width="9.80" height="5.20" fill="#7a7a7a" rx="1"/>
<rect x="20.00" y="54.80" width="3.80" height="1.60" fill="#F3F3F3"/>
<path d="M23.4 62.6 H30.4 L33.8 66 V76.6 H23.4 Z" fill="#fff" stroke="#8a8a8a" stroke-width="0.9"/>
<path d="M30.4 62.6 V66 H33.8" fill="none" stroke="#8a8a8a" stroke-width="0.8"/>
<text x="11.90" y="87.80" font-size="9.1" fill="#3a3a3a" textLength="20.30" lengthAdjust="spacingAndGlyphs" stroke="#3a3a3a" stroke-width="0.18">Paste</text>
<polygon points="19.25,95.20 23.75,95.20 21.50,97.82" fill="#666"/>
<path d="M42.6 53.4 L48.6 61 M49.4 53.4 L43.4 61" fill="none" stroke="#555" stroke-width="1.0"/>
<circle cx="42.6" cy="62" r="1.9" fill="none" stroke="#3B7DC4" stroke-width="0.9"/><circle cx="49.2" cy="62" r="1.9" fill="none" stroke="#3B7DC4" stroke-width="0.9"/>
<text x="54.40" y="61.80" font-size="9.1" fill="#3a3a3a" textLength="13.60" lengthAdjust="spacingAndGlyphs" stroke="#3a3a3a" stroke-width="0.18">Cut</text>
<path d="M40.2 70.6 H44.4 L46 72.2 V78 H40.2 Z" fill="#fff" stroke="#777" stroke-width="0.8"/>
<path d="M44.4 73 H48.8 L50.8 75 V80.6 H44.4 Z" fill="#fff" stroke="#777" stroke-width="0.8"/>
<line x1="45.80" y1="76.60" x2="49.40" y2="76.60" stroke="#3B7DC4" stroke-width="0.8"/>
<line x1="45.80" y1="78.40" x2="49.40" y2="78.40" stroke="#3B7DC4" stroke-width="0.8"/>
<line x1="41.40" y1="73.60" x2="43.40" y2="73.60" stroke="#3B7DC4" stroke-width="0.8"/>
<line x1="41.40" y1="75.40" x2="43.40" y2="75.40" stroke="#3B7DC4" stroke-width="0.8"/>
<text x="54.40" y="79.30" font-size="9.1" fill="#3a3a3a" textLength="20.40" lengthAdjust="spacingAndGlyphs" stroke="#3a3a3a" stroke-width="0.18">Copy</text>
<polygon points="82.25,75.20 86.55,75.20 84.40,77.71" fill="#666"/>
<polygon points="40.40,92.60 45.60,89.60 48.60,94.00 44.40,97.60" fill="#EDC57C"/>
<path d="M46 90.6 L50.6 88" fill="none" stroke="#666" stroke-width="2.4"/>
<path d="M45.2 90 L47.8 94" fill="none" stroke="#555" stroke-width="1.2"/>
<text x="54.40" y="96.60" font-size="9.1" fill="#3a3a3a" textLength="58.10" lengthAdjust="spacingAndGlyphs" stroke="#3a3a3a" stroke-width="0.18">Format Painter</text>
<text x="36.20" y="113.60" font-size="9.1" fill="#3a3a3a" textLength="37.80" lengthAdjust="spacingAndGlyphs" stroke="#3a3a3a" stroke-width="0.18">Clipboard</text>
<path d="M115 112.80000000000001 V108.4 H119.4 M117 110.4 L120.2 113.60000000000001 M120.4 111.0 V113.80000000000001 H117.6" fill="none" stroke="#8a8a8a" stroke-width="0.75"/>
<rect x="135.60" y="55.60" width="19.80" height="16.60" fill="#fff" stroke="#8a8a8a" stroke-width="0.9" rx="0.8"/>
<rect x="138.60" y="58.40" width="13.60" height="4.00" fill="#d0d0d0"/>
<line x1="138.60" y1="65.60" x2="152.20" y2="65.60" stroke="#aaa" stroke-width="0.8"/>
<line x1="138.60" y1="68.20" x2="152.20" y2="68.20" stroke="#aaa" stroke-width="0.8"/>
<path d="M138 57 L142.60 57.00 M138 57 L141.25 60.25 M138 57 L138.00 61.60 M138 57 L134.75 60.25 M138 57 L133.40 57.00 M138 57 L134.75 53.75 M138 57 L138.00 52.40 M138 57 L141.25 53.75" fill="none" stroke="#EDC068" stroke-width="1.3"/>
<circle cx="138" cy="57" r="1.5" fill="#F3F3F3"/>
<text x="136.90" y="87.80" font-size="9.1" fill="#3a3a3a" textLength="17.50" lengthAdjust="spacingAndGlyphs" stroke="#3a3a3a" stroke-width="0.18">New</text>
<text x="132.80" y="99.50" font-size="9.1" fill="#3a3a3a" textLength="18.40" lengthAdjust="spacingAndGlyphs" stroke="#3a3a3a" stroke-width="0.18">Slide</text>
<polygon points="153.45,95.20 157.75,95.20 155.60,97.71" fill="#666"/>
<rect x="163.80" y="53.60" width="11.20" height="9.80" fill="#fff" stroke="#777" stroke-width="0.9"/>
<rect x="165.40" y="56.60" width="3.40" height="5.00" fill="#c8c8c8"/>
<line x1="165.40" y1="55.20" x2="173.40" y2="55.20" stroke="#999" stroke-width="0.7"/>
<line x1="170.00" y1="57.40" x2="173.60" y2="57.40" stroke="#999" stroke-width="0.7"/>
<line x1="170.00" y1="59.20" x2="173.60" y2="59.20" stroke="#999" stroke-width="0.7"/>
<line x1="170.00" y1="61.00" x2="173.60" y2="61.00" stroke="#999" stroke-width="0.7"/>
<text x="178.00" y="61.80" font-size="9.1" fill="#3a3a3a" textLength="26.20" lengthAdjust="spacingAndGlyphs" stroke="#3a3a3a" stroke-width="0.18">Layout</text>
<polygon points="206.65,57.70 210.85,57.70 208.75,60.15" fill="#666"/>
<rect x="164.60" y="72.40" width="10.40" height="8.00" fill="#fff" stroke="#777" stroke-width="0.9"/>
<rect x="166.00" y="75.20" width="3.00" height="3.80" fill="#c8c8c8"/>
<line x1="170.00" y1="75.60" x2="173.60" y2="75.60" stroke="#999" stroke-width="0.7"/>
<line x1="170.00" y1="77.20" x2="173.60" y2="77.20" stroke="#999" stroke-width="0.7"/>
<line x1="170.00" y1="78.80" x2="173.60" y2="78.80" stroke="#999" stroke-width="0.7"/>
<path d="M164 74 A3.6 3.6 0 0 1 170.6 72.6" fill="none" stroke="#3B7DC4" stroke-width="1.2"/>
<polygon points="162.60,72.00 166.40,72.40 163.40,75.40" fill="#3B7DC4"/>
<text x="178.00" y="79.30" font-size="9.1" fill="#3a3a3a" textLength="20.60" lengthAdjust="spacingAndGlyphs" stroke="#3a3a3a" stroke-width="0.18">Reset</text>
<rect x="166.00" y="89.00" width="9.40" height="2.60" fill="#F3F3F3" stroke="#E8833A" stroke-width="0.9"/>
<rect x="168.00" y="93.40" width="7.20" height="5.00" fill="#fff" stroke="#777" stroke-width="0.9"/>
<line x1="168.00" y1="95.00" x2="175.20" y2="95.00" stroke="#777" stroke-width="0.8"/>
<circle cx="165.4" cy="89" r="1.7" fill="#EDC068"/>
<text x="178.00" y="96.60" font-size="9.1" fill="#3a3a3a" textLength="28.50" lengthAdjust="spacingAndGlyphs" stroke="#3a3a3a" stroke-width="0.18">Section</text>
<polygon points="208.85,92.00 213.15,92.00 211.00,94.51" fill="#666"/>
<text x="162.10" y="113.60" font-size="9.1" fill="#3a3a3a" textLength="21.90" lengthAdjust="spacingAndGlyphs" stroke="#3a3a3a" stroke-width="0.18">Slides</text>
<rect x="230.20" y="56.40" width="69.00" height="17.00" fill="#E6E6E6" stroke="#D0D0D0" stroke-width="0.8"/>
<rect x="299.40" y="56.40" width="40.40" height="17.00" fill="#E6E6E6" stroke="#D0D0D0" stroke-width="0.8"/>
<path d="M287.4 62.8 L291.8 67.4 L296.2 62.8" fill="none" stroke="#b0b0b0" stroke-width="0.9"/>
<path d="M327.6 62.8 L332 67.4 L336.4 62.8" fill="none" stroke="#b0b0b0" stroke-width="0.9"/>
<text x="302.20" y="68.20" font-size="8.6" fill="#ababab" textLength="8.80" lengthAdjust="spacingAndGlyphs">18</text>
<text x="345.00" y="69.40" font-size="11.5" fill="#ababab">A</text>
<path d="M352.6 61.6 L354 60 L355.4 61.6" fill="#ababab"/>
<text x="362.00" y="69.40" font-size="9.5" fill="#ababab">A</text>
<path d="M368.2 60 L369.6 61.6 L371 60" fill="#ababab"/>
<line x1="376.60" y1="57.60" x2="376.60" y2="72.40" stroke="#D2D2D2" stroke-width="0.9"/>
<text x="383.00" y="66.60" font-size="8.5" fill="#ababab">A</text>
<polygon points="386.40,66.80 391.00,62.00 394.00,65.00 389.60,69.80" fill="#c6c6c6"/>
<text x="235.00" y="90.60" font-size="9" fill="#ababab" font-weight="bold">B</text>
<text x="252.00" y="90.60" font-size="9" fill="#ababab" font-weight="bold" style="font-style:italic;font-family:'Liberation Serif',serif">I</text>
<text x="267.60" y="90.60" font-size="9" fill="#ababab">U</text>
<line x1="267.60" y1="92.00" x2="274.00" y2="92.00" stroke="#ababab" stroke-width="0.7"/>
<text x="284.40" y="90.60" font-size="9" fill="#ababab" font-weight="bold">S</text>
<text x="298.60" y="90.60" font-size="8" fill="#ababab" textLength="11.80" lengthAdjust="spacingAndGlyphs">abc</text>
<line x1="298.40" y1="88.00" x2="310.60" y2="88.00" stroke="#ababab" stroke-width="0.6"/>
<text x="315.00" y="89.00" font-size="8" fill="#ababab" textLength="12.00" lengthAdjust="spacingAndGlyphs">AV</text>
<path d="M316 91.6 H326 M317.4 90.4 L316 91.6 L317.4 92.8 M324.6 90.4 L326 91.6 L324.6 92.8" fill="none" stroke="#ababab" stroke-width="0.6"/>
<polygon points="330.05,87.50 333.95,87.50 332.00,89.78" fill="#b8b8b8"/>
<text x="339.80" y="90.60" font-size="9" fill="#ababab" textLength="11.20" lengthAdjust="spacingAndGlyphs">Aa</text>
<polygon points="354.45,87.50 358.35,87.50 356.40,89.78" fill="#b8b8b8"/>
<line x1="365.50" y1="80.60" x2="365.50" y2="95.40" stroke="#D2D2D2" stroke-width="0.9"/>
<text x="373.20" y="90.60" font-size="10.5" fill="#ababab">A</text>
<polygon points="387.45,87.50 391.35,87.50 389.40,89.78" fill="#b8b8b8"/>
<text x="298.00" y="113.60" font-size="9.1" fill="#3a3a3a" textLength="17.20" lengthAdjust="spacingAndGlyphs" stroke="#3a3a3a" stroke-width="0.18">Font</text>
<path d="M393.6 112.80000000000001 V108.4 H398.0 M395.6 110.4 L398.8 113.60000000000001 M399.0 111.0 V113.80000000000001 H396.20000000000005" fill="none" stroke="#b0b0b0" stroke-width="0.75"/>
<rect x="411.20" y="59.40" width="1.60" height="1.60" fill="#b4b4b4"/>
<line x1="414.60" y1="60.20" x2="421.60" y2="60.20" stroke="#b4b4b4" stroke-width="0.9"/>
<line x1="440.00" y1="60.20" x2="447.00" y2="60.20" stroke="#b4b4b4" stroke-width="0.9"/>
<rect x="436.60" y="59.30" width="1.20" height="1.80" fill="#b4b4b4"/>
<rect x="411.20" y="63.60" width="1.60" height="1.60" fill="#b4b4b4"/>
<line x1="414.60" y1="64.40" x2="421.60" y2="64.40" stroke="#b4b4b4" stroke-width="0.9"/>
<line x1="440.00" y1="64.40" x2="447.00" y2="64.40" stroke="#b4b4b4" stroke-width="0.9"/>
<rect x="436.60" y="63.50" width="1.20" height="1.80" fill="#b4b4b4"/>
<rect x="411.20" y="67.80" width="1.60" height="1.60" fill="#b4b4b4"/>
<line x1="414.60" y1="68.60" x2="421.60" y2="68.60" stroke="#b4b4b4" stroke-width="0.9"/>
<line x1="440.00" y1="68.60" x2="447.00" y2="68.60" stroke="#b4b4b4" stroke-width="0.9"/>
<rect x="436.60" y="67.70" width="1.20" height="1.80" fill="#b4b4b4"/>
<polygon points="426.85,63.50 430.75,63.50 428.80,65.78" fill="#b8b8b8"/>
<polygon points="452.45,63.50 456.35,63.50 454.40,65.78" fill="#b8b8b8"/>
<line x1="462.30" y1="57.60" x2="462.30" y2="72.40" stroke="#D2D2D2" stroke-width="0.9"/>
<line x1="468.00" y1="60.00" x2="479.60" y2="60.00" stroke="#b4b4b4" stroke-width="0.9"/>
<line x1="468.00" y1="69.00" x2="479.60" y2="69.00" stroke="#b4b4b4" stroke-width="0.9"/>
<line x1="473.00" y1="63.00" x2="479.60" y2="63.00" stroke="#b4b4b4" stroke-width="0.9"/>
<line x1="473.00" y1="66.00" x2="479.60" y2="66.00" stroke="#b4b4b4" stroke-width="0.9"/>
<line x1="485.60" y1="60.00" x2="497.20" y2="60.00" stroke="#b4b4b4" stroke-width="0.9"/>
<line x1="485.60" y1="69.00" x2="497.20" y2="69.00" stroke="#b4b4b4" stroke-width="0.9"/>
<line x1="490.60" y1="63.00" x2="497.20" y2="63.00" stroke="#b4b4b4" stroke-width="0.9"/>
<line x1="490.60" y1="66.00" x2="497.20" y2="66.00" stroke="#b4b4b4" stroke-width="0.9"/>
<path d="M472 64.5 H468.4 M470 62.8 L468.2 64.5 L470 66.2" fill="none" stroke="#b4b4b4" stroke-width="0.8"/>
<path d="M485.8 64.5 H489.4 M487.8 62.8 L489.6 64.5 L487.8 66.2" fill="none" stroke="#b4b4b4" stroke-width="0.8"/>
<line x1="503.00" y1="57.60" x2="503.00" y2="72.40" stroke="#D2D2D2" stroke-width="0.9"/>
<line x1="512.60" y1="60.00" x2="519.60" y2="60.00" stroke="#b4b4b4" stroke-width="0.9"/>
<line x1="512.60" y1="63.00" x2="519.60" y2="63.00" stroke="#b4b4b4" stroke-width="0.9"/>
<line x1="512.60" y1="66.00" x2="519.60" y2="66.00" stroke="#b4b4b4" stroke-width="0.9"/>
<line x1="512.60" y1="69.00" x2="519.60" y2="69.00" stroke="#b4b4b4" stroke-width="0.9"/>
<path d="M509.4 59.4 V69.6 M508 61 L509.4 59.4 L510.8 61 M508 68 L509.4 69.6 L510.8 68" fill="none" stroke="#b4b4b4" stroke-width="0.7"/>
<polygon points="522.05,63.50 525.95,63.50 524.00,65.78" fill="#b8b8b8"/>
<line x1="411.60" y1="84.40" x2="422.40" y2="84.40" stroke="#b4b4b4" stroke-width="0.9"/>
<line x1="411.60" y1="86.80" x2="418.60" y2="86.80" stroke="#b4b4b4" stroke-width="0.9"/>
<line x1="411.60" y1="89.20" x2="422.40" y2="89.20" stroke="#b4b4b4" stroke-width="0.9"/>
<line x1="411.60" y1="91.60" x2="418.60" y2="91.60" stroke="#b4b4b4" stroke-width="0.9"/>
<line x1="428.60" y1="84.40" x2="439.40" y2="84.40" stroke="#b4b4b4" stroke-width="0.9"/>
<line x1="430.50" y1="86.80" x2="437.50" y2="86.80" stroke="#b4b4b4" stroke-width="0.9"/>
<line x1="428.60" y1="89.20" x2="439.40" y2="89.20" stroke="#b4b4b4" stroke-width="0.9"/>
<line x1="430.50" y1="91.60" x2="437.50" y2="91.60" stroke="#b4b4b4" stroke-width="0.9"/>
<line x1="444.80" y1="84.40" x2="455.60" y2="84.40" stroke="#b4b4b4" stroke-width="0.9"/>
<line x1="448.60" y1="86.80" x2="455.60" y2="86.80" stroke="#b4b4b4" stroke-width="0.9"/>
<line x1="444.80" y1="89.20" x2="455.60" y2="89.20" stroke="#b4b4b4" stroke-width="0.9"/>
<line x1="448.60" y1="91.60" x2="455.60" y2="91.60" stroke="#b4b4b4" stroke-width="0.9"/>
<line x1="461.00" y1="84.40" x2="471.80" y2="84.40" stroke="#b4b4b4" stroke-width="0.9"/>
<line x1="461.00" y1="86.80" x2="471.80" y2="86.80" stroke="#b4b4b4" stroke-width="0.9"/>
<line x1="461.00" y1="89.20" x2="471.80" y2="89.20" stroke="#b4b4b4" stroke-width="0.9"/>
<line x1="461.00" y1="91.60" x2="471.80" y2="91.60" stroke="#b4b4b4" stroke-width="0.9"/>
<line x1="477.30" y1="80.60" x2="477.30" y2="95.40" stroke="#D2D2D2" stroke-width="0.9"/>
<line x1="484.00" y1="84.40" x2="488.40" y2="84.40" stroke="#b4b4b4" stroke-width="0.9"/>
<line x1="489.80" y1="84.40" x2="494.20" y2="84.40" stroke="#b4b4b4" stroke-width="0.9"/>
<line x1="484.00" y1="86.80" x2="488.40" y2="86.80" stroke="#b4b4b4" stroke-width="0.9"/>
<line x1="489.80" y1="86.80" x2="494.20" y2="86.80" stroke="#b4b4b4" stroke-width="0.9"/>
<line x1="484.00" y1="89.20" x2="488.40" y2="89.20" stroke="#b4b4b4" stroke-width="0.9"/>
<line x1="489.80" y1="89.20" x2="494.20" y2="89.20" stroke="#b4b4b4" stroke-width="0.9"/>
<line x1="484.00" y1="91.60" x2="488.40" y2="91.60" stroke="#b4b4b4" stroke-width="0.9"/>
<line x1="489.80" y1="91.60" x2="494.20" y2="91.60" stroke="#b4b4b4" stroke-width="0.9"/>
<polygon points="498.05,87.50 501.95,87.50 500.00,89.78" fill="#b8b8b8"/>
<path d="M534.4 55 V64.4 M537 55 V64.4 M539.6 57 V64.4" fill="none" stroke="#b4b4b4" stroke-width="0.8"/>
<text x="540.40" y="59.60" font-size="6.5" fill="#b4b4b4">A</text>
<path d="M541.8 60.4 V64.4 M540.6 63 L541.8 64.4 L543 63" fill="none" stroke="#b4b4b4" stroke-width="0.7"/>
<text x="547.80" y="61.80" font-size="9.1" fill="#A6A6A6" textLength="53.00" lengthAdjust="spacingAndGlyphs">Text Direction</text>
<polygon points="603.45,57.70 607.35,57.70 605.40,59.98" fill="#b8b8b8"/>
<rect x="534.00" y="71.00" width="10.00" height="10.00" fill="none" stroke="#b4b4b4" stroke-width="0.8" stroke-dasharray="1.4 1"/>
<path d="M539 72.6 V79.4 M537.6 74 L539 72.6 L540.4 74 M537.6 78 L539 79.4 L540.4 78" fill="none" stroke="#b4b4b4" stroke-width="0.7"/>
<text x="547.80" y="79.30" font-size="9.1" fill="#A6A6A6" textLength="38.40" lengthAdjust="spacingAndGlyphs">Align Text</text>
<polygon points="588.45,75.20 592.35,75.20 590.40,77.48" fill="#b8b8b8"/>
<rect x="536.40" y="90.60" width="8.00" height="7.60" fill="#fff" stroke="#b4b4b4" stroke-width="0.8"/>
<polygon points="533.40,88.40 540.40,87.40 540.40,90.60 536.40,90.60 536.40,93.40" fill="#a8a8a8"/>
<line x1="538.00" y1="93.00" x2="543.00" y2="93.00" stroke="#b4b4b4" stroke-width="0.7"/>
<line x1="538.00" y1="95.40" x2="543.00" y2="95.40" stroke="#b4b4b4" stroke-width="0.7"/>
<text x="547.80" y="96.60" font-size="9.1" fill="#A6A6A6" textLength="79.70" lengthAdjust="spacingAndGlyphs">Convert to SmartArt</text>
<polygon points="629.25,92.00 633.15,92.00 631.20,94.28" fill="#b8b8b8"/>
<text x="497.20" y="113.60" font-size="9.1" fill="#3a3a3a" textLength="39.00" lengthAdjust="spacingAndGlyphs" stroke="#3a3a3a" stroke-width="0.18">Paragraph</text>
<path d="M635 112.80000000000001 V108.4 H639.4 M637 110.4 L640.2 113.60000000000001 M640.4 111.0 V113.80000000000001 H637.6" fill="none" stroke="#b0b0b0" stroke-width="0.75"/>
<rect x="651.20" y="52.80" width="103.20" height="45.80" fill="#fff" stroke="#D4D4D4" stroke-width="0.9"/>
<rect x="742.60" y="52.80" width="11.80" height="15.20" fill="#F3F3F3" stroke="#D4D4D4" stroke-width="0.8"/>
<rect x="742.60" y="68.00" width="11.80" height="14.20" fill="#F7F7F7" stroke="#ababab" stroke-width="0.8"/>
<rect x="742.60" y="82.20" width="11.80" height="16.40" fill="#F7F7F7" stroke="#ababab" stroke-width="0.8"/>
<path d="M744.6 62 L748.5 58 L752.4 62" fill="none" stroke="#c8c8c8" stroke-width="0.9"/>
<path d="M744.6 73.4 L748.5 77.4 L752.4 73.4" fill="none" stroke="#666" stroke-width="0.9"/>
<path d="M744.6 85 H752.4 M744.6 89.6 L748.5 93.6 L752.4 89.6" fill="none" stroke="#666" stroke-width="0.9"/>
<path d="M654.6 63.6 V60 A4.2 4.2 0 0 1 663 60 V62 H664.4 L661.8 65.4 L659.2 62 H660.6 V60 A1.8 1.8 0 0 0 657 60 V63.6 Z" fill="none" stroke="#6a6a6a" stroke-width="0.85"/>
<path d="M671 56.4 H680 L677 64.6 H668 Z" fill="none" stroke="#6a6a6a" stroke-width="0.85"/>
<rect x="683.40" y="55.60" width="10.40" height="9.20" fill="#fff" stroke="#6a6a6a" stroke-width="0.85"/>
<text x="684.60" y="60.40" font-size="5.5" fill="#3B7DC4" font-weight="bold">A</text>
<line x1="689.60" y1="57.60" x2="692.60" y2="57.60" stroke="#aaa" stroke-width="0.6"/>
<line x1="689.60" y1="59.40" x2="692.60" y2="59.40" stroke="#aaa" stroke-width="0.6"/>
<line x1="684.80" y1="61.60" x2="692.60" y2="61.60" stroke="#aaa" stroke-width="0.6"/>
<line x1="684.80" y1="63.20" x2="692.60" y2="63.20" stroke="#aaa" stroke-width="0.6"/>
<line x1="698.80" y1="55.80" x2="708.80" y2="65.40" stroke="#6a6a6a" stroke-width="0.85"/>
<line x1="713.80" y1="55.80" x2="723.40" y2="65.00" stroke="#6a6a6a" stroke-width="0.85"/>
<polygon points="723.90,65.50 720.60,64.80 723.20,62.20" fill="#6a6a6a"/>
<rect x="728.20" y="56.60" width="11.40" height="8.00" fill="none" stroke="#6a6a6a" stroke-width="0.85"/>
<ellipse cx="659" cy="75.5" rx="5.4" ry="4.3" fill="none" stroke="#6a6a6a" stroke-width="0.85"/>
<rect x="668.20" y="71.60" width="11.60" height="7.80" fill="none" stroke="#6a6a6a" stroke-width="0.85" rx="1.6"/>
<path d="M689.4 70.8 L694.2 80.2 H684.6 Z" fill="none" stroke="#6a6a6a" stroke-width="0.85"/>
<path d="M698.4 71.2 H704 V79.8 H709.6" fill="none" stroke="#6a6a6a" stroke-width="0.85"/>
<path d="M713.4 70.8 H718.4 V79 H723.4" fill="none" stroke="#6a6a6a" stroke-width="0.85"/>
<polygon points="725.00,79.00 722.20,77.40 722.20,80.60" fill="#6a6a6a"/>
<path d="M728.2 73.2 H733.4 V70.4 L738.8 75.5 L733.4 80.6 V77.8 H728.2 Z" fill="none" stroke="#6a6a6a" stroke-width="0.85"/>
<path d="M656.2 85.4 H661.6 V90.4 H664.2 L658.9 95.8 L653.6 90.4 H656.2 Z" fill="none" stroke="#6a6a6a" stroke-width="0.85"/>
<path d="M668.6 95 V89 L671.6 86.4 H677 V89.6 H679 V95 Z" fill="none" stroke="#6a6a6a" stroke-width="0.85"/>
<path d="M688.4 85.4 C685 88 687 89 689 89.4 C692 90 687 93 689.4 95 C691.6 96.4 692 93.6 690.6 92.4" fill="none" stroke="#6a6a6a" stroke-width="0.85"/>
<path d="M698.8 86.2 C705 86.2 709.4 90 709.6 95.4" fill="none" stroke="#6a6a6a" stroke-width="0.85"/>
<path d="M713.2 94.4 C715.4 84.6 718.6 84.4 719.8 90 C720.8 95 722.8 96 724.8 95.2" fill="none" stroke="#6a6a6a" stroke-width="0.85"/>
<text x="731.60" y="93.60" font-size="9" fill="#6a6a6a">{</text>
<rect x="773.60" y="57.00" width="7.40" height="7.40" fill="#EDC068"/>
<rect x="766.90" y="63.60" width="7.60" height="7.50" fill="#EDC068"/>
<rect x="764.80" y="54.60" width="7.80" height="7.60" fill="#fff" stroke="#777" stroke-width="0.9"/>
<rect x="775.70" y="65.80" width="7.80" height="7.60" fill="#fff" stroke="#777" stroke-width="0.9"/>
<text x="758.60" y="87.80" font-size="9.1" fill="#3a3a3a" textLength="31.40" lengthAdjust="spacingAndGlyphs" stroke="#3a3a3a" stroke-width="0.18">Arrange</text>
<polygon points="772.65,95.20 776.95,95.20 774.80,97.71" fill="#666"/>
<rect x="798.60" y="54.80" width="19.40" height="19.60" fill="#F1ECF3" stroke="#cfc6d4" stroke-width="1.0" rx="3.5"/>
<path d="M807 72.6 L819 59.6 L820.6 61.2 L811 74.4 Z" fill="#bdbdbd"/>
<circle cx="808.6" cy="73.4" r="2" fill="#b0b0b0"/>
<text x="797.20" y="87.80" font-size="9.1" fill="#A6A6A6" textLength="22.60" lengthAdjust="spacingAndGlyphs">Quick</text>
<text x="794.20" y="99.50" font-size="9.1" fill="#A6A6A6" textLength="21.80" lengthAdjust="spacingAndGlyphs">Styles</text>
<polygon points="818.45,95.20 822.35,95.20 820.40,97.48" fill="#b8b8b8"/>
<path d="M829.6 58 L834 53.6 L838 57.6 L833.4 62 Z" fill="none" stroke="#b0b0b0" stroke-width="0.9"/>
<rect x="827.40" y="62.60" width="11.40" height="2.20" fill="#d8d8d8"/>
<text x="841.20" y="61.80" font-size="9.1" fill="#A6A6A6" textLength="36.80" lengthAdjust="spacingAndGlyphs">Shape Fill</text>
<polygon points="880.65,57.70 884.55,57.70 882.60,59.98" fill="#b8b8b8"/>
<rect x="827.60" y="71.60" width="8.60" height="8.40" fill="none" stroke="#b0b0b0" stroke-width="0.9"/>
<path d="M832 77 L838.4 70.6" fill="none" stroke="#a0a0a0" stroke-width="1.6"/>
<text x="841.20" y="79.30" font-size="9.1" fill="#A6A6A6" textLength="55.60" lengthAdjust="spacingAndGlyphs">Shape Outline</text>
<polygon points="898.85,75.20 902.75,75.20 900.80,77.48" fill="#b8b8b8"/>
<ellipse cx="833.4" cy="93" rx="5.4" ry="4.2" fill="#e2e2e2" stroke="#b0b0b0" stroke-width="0.9"/>
<rect x="830.00" y="89.40" width="7.00" height="5.00" fill="#fff" stroke="#b0b0b0" stroke-width="0.8"/>
<text x="841.20" y="96.60" font-size="9.1" fill="#A6A6A6" textLength="52.30" lengthAdjust="spacingAndGlyphs">Shape Effects</text>
<polygon points="895.85,92.00 899.75,92.00 897.80,94.28" fill="#b8b8b8"/>
<text x="755.60" y="113.60" font-size="9.1" fill="#3a3a3a" textLength="31.20" lengthAdjust="spacingAndGlyphs" stroke="#3a3a3a" stroke-width="0.18">Drawing</text>
<path d="M903.2 112.80000000000001 V108.4 H907.6 M905.2 110.4 L908.4000000000001 113.60000000000001 M908.6 111.0 V113.80000000000001 H905.8000000000001" fill="none" stroke="#b0b0b0" stroke-width="0.75"/>
<circle cx="928" cy="57.4" r="3.1" fill="none" stroke="#3B7DC4" stroke-width="1.1"/>
<line x1="925.80" y1="59.80" x2="922.00" y2="63.60" stroke="#3B7DC4" stroke-width="1.3"/>
<text x="935.00" y="61.80" font-size="9.1" fill="#333" textLength="16.80" lengthAdjust="spacingAndGlyphs" stroke="#333" stroke-width="0.18">Find</text>
<text x="920.40" y="75.60" font-size="7.4" fill="#555">a</text>
<text x="924.20" y="75.60" font-size="7.4" fill="#8a3ab0">b</text>
<text x="924.20" y="80.80" font-size="7.4" fill="#555">a</text>
<text x="928.20" y="80.80" font-size="7.4" fill="#3B7DC4">c</text>
<path d="M921 77 Q921 79.6 923.6 79.4" fill="none" stroke="#3B7DC4" stroke-width="0.7"/>
<text x="935.00" y="79.30" font-size="9.1" fill="#333" textLength="30.50" lengthAdjust="spacingAndGlyphs" stroke="#333" stroke-width="0.18">Replace</text>
<polygon points="973.25,75.20 977.15,75.20 975.20,77.48" fill="#666"/>
<path d="M923.4 87.2 V96.6 L925.8 94.4 L927.4 98 L928.8 97.4 L927.2 93.8 H930.4 Z" fill="#fff" stroke="#555" stroke-width="0.8"/>
<text x="935.00" y="96.60" font-size="9.1" fill="#333" textLength="23.00" lengthAdjust="spacingAndGlyphs" stroke="#333" stroke-width="0.18">Select</text>
<polygon points="959.85,92.00 963.75,92.00 961.80,94.28" fill="#666"/>
<text x="935.00" y="113.60" font-size="9.1" fill="#3a3a3a" textLength="27.50" lengthAdjust="spacingAndGlyphs" stroke="#3a3a3a" stroke-width="0.18">Editing</text>
<path d="M1010.2 113.6 L1014 109.8 L1017.8 113.6" fill="none" stroke="#666" stroke-width="0.9"/>
</g>
<g id="g-thumbs">
<text x="9.00" y="139.40" font-size="11.2" fill="#666">1</text>
<text x="9.00" y="218.40" font-size="11.2" fill="#666">2</text>
<text x="9.00" y="297.40" font-size="11.2" fill="#666">3</text>
<text x="9.00" y="375.90" font-size="11.2" fill="#666">4</text>
<text x="9.00" y="454.60" font-size="11.2" fill="#C8532F">5</text>
<rect x="26.50" y="132.20" width="111.50" height="63.20" fill="#fff" stroke="#c9c9c9" stroke-width="0.8"/>
<use href="#sA" x="27.3" y="133.0" width="110" height="61.8"/>
<rect x="26.50" y="211.20" width="111.50" height="63.20" fill="#fff" stroke="#c9c9c9" stroke-width="0.8"/>
<use href="#sA" x="27.3" y="212.0" width="110" height="61.8"/>
<rect x="26.50" y="290.20" width="111.50" height="63.20" fill="#fff" stroke="#c9c9c9" stroke-width="0.8"/>
<use href="#sA" x="27.3" y="291.0" width="110" height="61.8"/>
<rect x="26.50" y="368.30" width="111.20" height="63.20" fill="#fff" stroke="#c9c9c9" stroke-width="0.8"/>
<use href="#s4" x="27.3" y="369" width="109.8" height="61.8" style="--bw:1.1px;--gw:1.3px;--lw:1.05px;--dw:0.45px;--rw:1.1px;--aw:0.45px;--tw:0.22px"/>
<rect x="25.30" y="445.80" width="113.90" height="66.40" fill="#fff" stroke="#7A1C1C" stroke-width="2.2"/>
<use href="#s5" x="27.6" y="448.2" width="109.4" height="61.6" style="--bw:1.1px;--gw:1.3px;--lw:1.05px;--dw:0.45px;--rw:1.1px;--aw:0.45px;--tw:0.22px"/>
</g>
<g id="g-editor">
<use href="#s5" x="204.6" y="118.75" width="759.9" height="428.35"/>
<rect x="1012.60" y="119.40" width="9.60" height="11.00" fill="#fff" stroke="#dcdcdc" stroke-width="0.6"/>
<polygon points="1015.00,126.60 1020.00,126.60 1017.50,123.40" fill="#666"/>
<rect x="1012.60" y="441.00" width="9.60" height="61.00" fill="#fff" stroke="#dcdcdc" stroke-width="0.6"/>
<rect x="1012.60" y="503.60" width="9.60" height="10.60" fill="#fff" stroke="#dcdcdc" stroke-width="0.6"/>
<polygon points="1015.00,507.60 1020.00,507.60 1017.50,510.80" fill="#666"/>
<polygon points="1015.00,521.20 1020.00,521.20 1017.50,518.40" fill="#666"/>
<polygon points="1015.00,524.00 1020.00,524.00 1017.50,521.20" fill="#666"/>
<polygon points="1015.00,531.80 1020.00,531.80 1017.50,534.60" fill="#666"/>
<polygon points="1015.00,534.60 1020.00,534.60 1017.50,537.40" fill="#666"/>
</g>
<g id="g-status">
<text x="6.00" y="570.20" font-size="8.6" fill="#444" textLength="42.30" lengthAdjust="spacingAndGlyphs">Slide 5 of 5</text>
<path d="M64 563 H68 V571 H64 Z M68 563.6 L72.6 562.6 V570.6 L68 571" fill="none" stroke="#666" stroke-width="0.8"/>
<path d="M69.4 566.6 L70.6 568 L72.4 565" fill="none" stroke="#666" stroke-width="0.7"/>
<text x="86.30" y="570.20" font-size="8.6" fill="#444" textLength="67.50" lengthAdjust="spacingAndGlyphs">English (Malaysia)</text>
<path d="M638.6 566.6 H646.8 M638.6 568.8 H646.8 M638.6 571 H646.8" fill="none" stroke="#666" stroke-width="0.8"/>
<polygon points="640.60,565.00 644.80,565.00 642.70,562.40" fill="#666"/>
<text x="651.00" y="570.20" font-size="8.6" fill="#444" textLength="21.80" lengthAdjust="spacingAndGlyphs">Notes</text>
<path d="M688.4 562.6 H698.2 V569 H692.6 L690.4 571.6 V569 H688.4 Z" fill="#555"/>
<text x="701.00" y="570.20" font-size="8.6" fill="#444" textLength="40.20" lengthAdjust="spacingAndGlyphs">Comments</text>
<rect x="756.50" y="558.60" width="28.80" height="15.60" fill="#C9C9C9"/>
<rect x="765.40" y="562.00" width="10.80" height="9.40" fill="none" stroke="#555" stroke-width="0.9"/>
<rect x="767.40" y="564.00" width="4.00" height="3.00" fill="none" stroke="#555" stroke-width="0.7"/>
<line x1="765.40" y1="569.20" x2="776.20" y2="569.20" stroke="#555" stroke-width="0.7"/>
<line x1="773.00" y1="564.00" x2="775.00" y2="564.00" stroke="#555" stroke-width="0.7"/>
<rect x="795.40" y="562.20" width="4.60" height="3.60" fill="none" stroke="#777" stroke-width="0.8"/>
<rect x="801.40" y="562.20" width="4.60" height="3.60" fill="none" stroke="#777" stroke-width="0.8"/>
<rect x="795.40" y="567.60" width="4.60" height="3.60" fill="none" stroke="#777" stroke-width="0.8"/>
<rect x="801.40" y="567.60" width="4.60" height="3.60" fill="none" stroke="#777" stroke-width="0.8"/>
<path d="M825.4 563 L830.2 564.2 L835 563 V570.4 L830.2 571.6 L825.4 570.4 Z M830.2 564.2 V571.6" fill="none" stroke="#777" stroke-width="0.8"/>
<path d="M855.4 562.6 H865 M856.4 562.6 V568.2 H864 V562.6 M860.2 568.2 V570.6 M857.6 571.4 H862.8" fill="none" stroke="#777" stroke-width="0.85"/>
<line x1="880.00" y1="567.20" x2="885.40" y2="567.20" stroke="#555" stroke-width="0.9"/>
<line x1="890.00" y1="567.40" x2="964.50" y2="567.40" stroke="#9a9a9a" stroke-width="0.8"/>
<line x1="927.30" y1="564.80" x2="927.30" y2="570.00" stroke="#9a9a9a" stroke-width="0.8"/>
<rect x="917.50" y="562.80" width="3.50" height="8.60" fill="#666"/>
<path d="M968.4 567.2 H974.6 M971.5 564.1 V570.3" fill="none" stroke="#555" stroke-width="0.9"/>
<text x="984.50" y="570.20" font-size="8.6" fill="#444" textLength="15.30" lengthAdjust="spacingAndGlyphs">80%</text>
<rect x="1010.60" y="562.20" width="8.40" height="9.20" fill="none" stroke="#777" stroke-width="0.9"/>
<path d="M1012.4 564 L1014 565.8 M1017.2 564 L1015.6 565.8 M1012.4 569.6 L1014 567.8 M1017.2 569.6 L1015.6 567.8" fill="none" stroke="#555" stroke-width="0.9"/>
</g>
</svg>
</body></html>
